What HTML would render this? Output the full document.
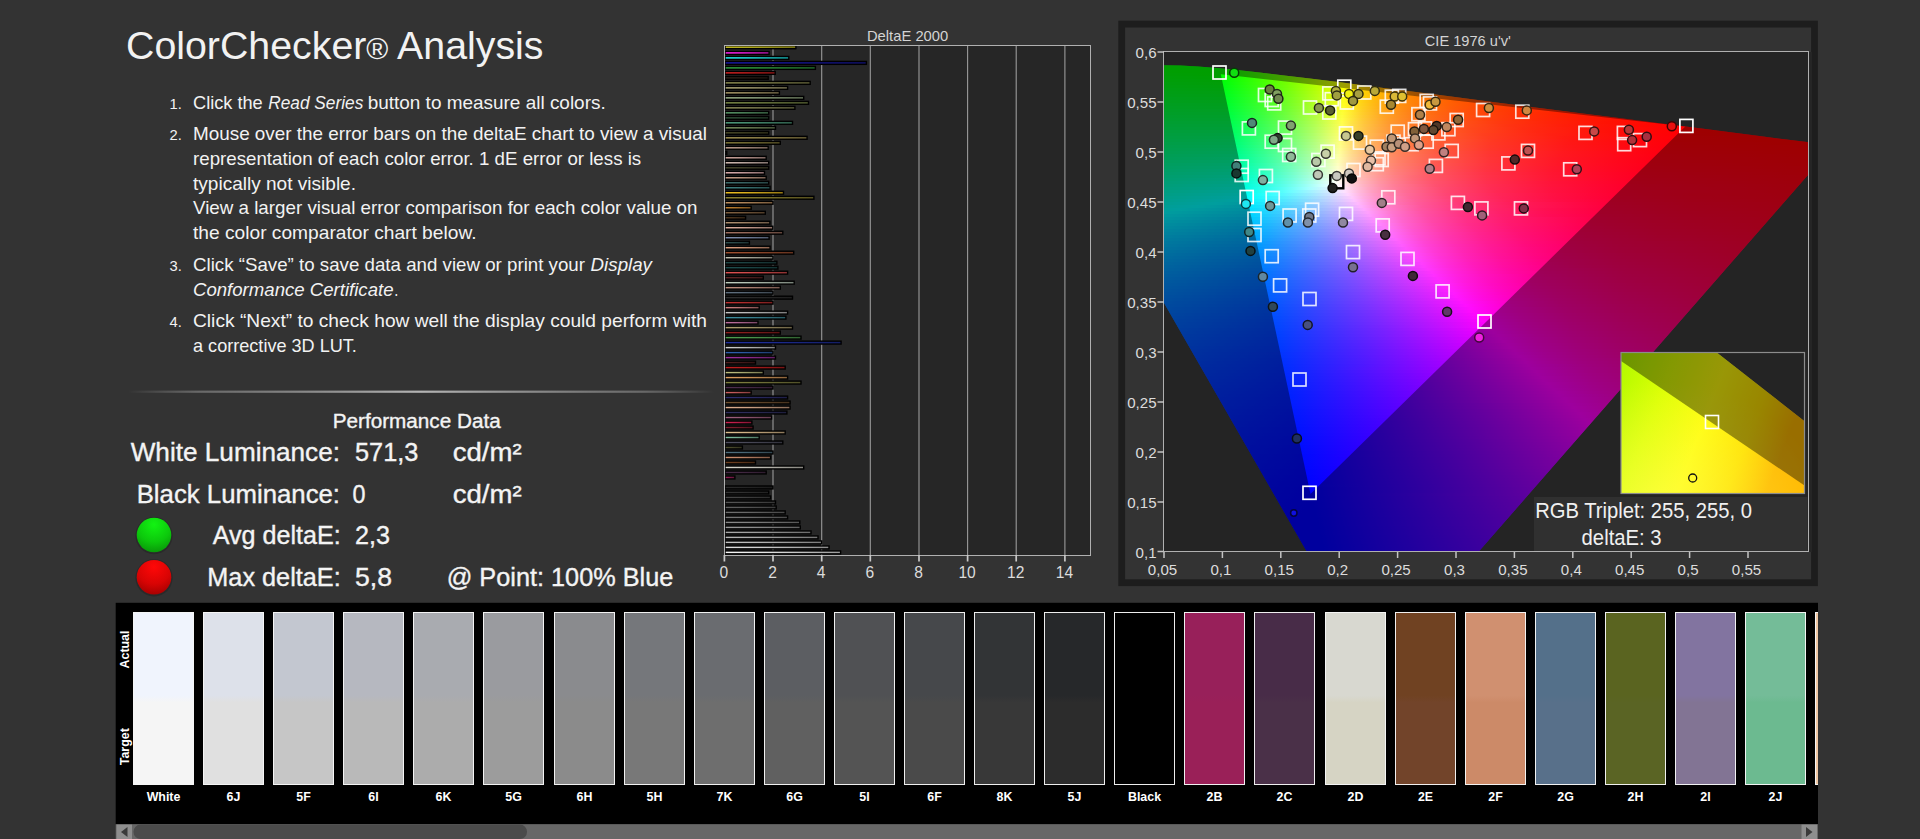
<!DOCTYPE html><html><head><meta charset="utf-8"><title>ColorChecker Analysis</title><style>
html,body{margin:0;padding:0;background:#333}body{width:1920px;height:839px;position:relative;overflow:hidden;font-family:'Liberation Sans',sans-serif}
#cie{position:absolute;left:1164px;top:52px;width:644px;height:499.5px;background:#242424;overflow:hidden}
#cie i{display:block;height:3px}
#ov{position:absolute;left:0;top:0}
text{font-family:'Liberation Sans',sans-serif}
</style></head><body>
<div id="cie">
<i></i>
<i></i>
<i></i>
<i></i>
<i style="background:linear-gradient(90deg,#00ff00 0px,#00ff00 54px,#05ff00 58px)"></i>
<i style="background:linear-gradient(90deg,#00ff01 0px,#01ff00 56px,#35ff00 88px)"></i>
<i style="background:linear-gradient(90deg,#00ff05 0px,#00ff00 56px,#31ff00 86px,#64ff00 114px)"></i>
<i style="background:linear-gradient(90deg,#00ff09 0px,#02ff00 58px,#49ff00 100px,#95ff00 138px)"></i>
<i style="background:linear-gradient(90deg,#00ff0d 0px,#01ff05 58px,#2fff00 86px,#5fff00 112px,#95ff00 138px,#ccff00 162px)"></i>
<i style="background:linear-gradient(90deg,#00ff11 0px,#00ff09 58px,#32ff04 88px,#66ff00 116px,#b0ff00 150px,#fbff00 180px,#fff300 186px)"></i>
<i style="background:linear-gradient(90deg,#00ff15 0px,#02ff0d 60px,#3cff08 94px,#76ff03 124px,#b5ff00 152px,#fcff00 180px,#fffd00 182px,#ffdb00 196px,#ffbf00 210px)"></i>
<i style="background:linear-gradient(90deg,#00ff19 0px,#01ff12 60px,#3bff0d 94px,#76ff08 124px,#b5ff03 152px,#fdff00 180px,#ffc500 206px,#ff9900 234px)"></i>
<i style="background:linear-gradient(90deg,#00ff1e 0px,#00ff17 60px,#3aff12 94px,#76ff0d 124px,#b5ff08 152px,#fdff03 180px,#ffd500 198px,#ffb600 214px,#ff9800 234px,#ff7e00 256px)"></i>
<i style="background:linear-gradient(90deg,#00ff22 0px,#02ff1b 62px,#3dff17 96px,#7aff13 126px,#baff0e 154px,#feff09 180px,#ffd004 200px,#ffa800 222px,#ff8600 248px,#ff6600 280px)"></i>
<i style="background:linear-gradient(90deg,#00ff26 0px,#01ff20 62px,#3dff1c 96px,#79ff18 126px,#baff14 154px,#ffff0f 180px,#ffc708 204px,#ff9902 232px,#ff7400 264px,#ff5300 304px)"></i>
<i style="background:linear-gradient(90deg,#00ff2b 0px,#00ff25 62px,#38ff22 94px,#75ff1e 124px,#b5ff1a 152px,#ffff15 180px,#ffe011 192px,#ffc20d 206px,#ffa609 222px,#ff9005 238px,#ff6600 278px,#ff4500 326px)"></i>
<i style="background:linear-gradient(90deg,#00ff2f 0px,#02ff2a 64px,#38ff27 94px,#74ff24 124px,#b5ff20 152px,#fffe1c 180px,#ffda16 194px,#ffba11 210px,#ff9d0c 228px,#ff8508 246px,#ff5a01 292px,#ff3800 350px)"></i>
<i style="background:linear-gradient(90deg,#00ff34 0px,#01ff2f 64px,#3bff2c 96px,#74ff29 124px,#b0ff26 150px,#fffd22 180px,#ffd51b 196px,#ffb515 212px,#ff960f 232px,#ff7b0a 254px,#ff6506 278px,#ff5002 306px,#ff2c00 374px)"></i>
<i style="background:linear-gradient(90deg,#00ff38 0px,#00ff34 64px,#3aff32 96px,#73ff2f 124px,#b0ff2d 150px,#fffc29 180px,#ffd421 196px,#ffb119 214px,#ff9013 236px,#ff740d 260px,#ff5c08 288px,#ff4603 320px,#ff2300 398px)"></i>
<i style="background:linear-gradient(90deg,#00ff3d 0px,#03ff39 66px,#39ff37 96px,#73ff35 124px,#abff33 148px,#fdff30 178px,#fffc2f 180px,#ffcf25 198px,#ffa91d 218px,#ff8715 242px,#ff6c0f 268px,#ff530a 298px,#ff3d05 334px,#ff1b00 420px)"></i>
<i style="background:linear-gradient(90deg,#00ff41 0px,#01ff3f 66px,#38ff3d 96px,#73ff3b 124px,#b6ff39 152px,#fdff37 178px,#fffb36 180px,#ffce2b 198px,#ffa521 220px,#ff8419 244px,#ff6511 274px,#ff4c0b 308px,#ff3706 346px,#ff2301 392px,#ff1300 444px)"></i>
<i style="background:linear-gradient(90deg,#00ff46 0px,#00ff44 66px,#3bff43 98px,#77ff41 126px,#b6ff40 152px,#feff3e 178px,#ffcd31 198px,#ffa426 220px,#ff811c 246px,#ff6114 278px,#ff470d 314px,#ff3007 358px,#ff1d02 408px,#ff0d00 468px)"></i>
<i style="background:linear-gradient(90deg,#00ff4b 0px,#00ff49 66px,#03ff49 68px,#3bff48 98px,#76ff47 126px,#b6ff46 152px,#ffff45 178px,#ffcc37 198px,#ffa02a 222px,#ff7b1f 250px,#ff5b16 284px,#ff400e 324px,#ff2a08 370px,#ff1703 426px,#ff0700 492px)"></i>
<i style="background:linear-gradient(90deg,#00ff50 0px,#02ff4f 68px,#3aff4e 98px,#76ff4e 126px,#b6ff4d 152px,#fffe4c 178px,#ffe344 188px,#ffc73b 200px,#ff9c2e 224px,#ff7622 254px,#ff5618 290px,#ff3b10 332px,#ff2509 382px,#ff1203 442px,#ff0200 514px)"></i>
<i style="background:linear-gradient(90deg,#00ff55 0px,#01ff54 68px,#39ff54 98px,#76ff54 126px,#b6ff54 152px,#fffe53 178px,#ffe24a 188px,#ffc641 200px,#ff9832 226px,#ff7125 258px,#ff511a 296px,#ff3411 344px,#ff1e09 400px,#ff0802 480px,#ff0000 538px)"></i>
<i style="background:linear-gradient(90deg,#00ff5a 0px,#00ff5a 68px,#34ff5a 96px,#71ff5b 124px,#b1ff5b 150px,#fffd5b 178px,#ffdc4f 190px,#ffc145 202px,#ff9135 230px,#ff6a27 264px,#ff4a1b 304px,#ff2d11 358px,#ff1509 426px,#ff0001 518px,#ff0000 562px)"></i>
<i style="background:linear-gradient(90deg,#00ff5f 0px,#02ff60 70px,#38ff61 98px,#75ff61 126px,#b1ff62 150px,#fcff63 176px,#fffc62 178px,#ffdb55 190px,#ffc04b 202px,#ffa641 216px,#ff8e38 232px,#ff6529 268px,#ff461d 310px,#ff2712 372px,#ff0f09 448px,#ff0003 516px,#ff0000 584px)"></i>
<i style="background:linear-gradient(90deg,#00ff64 0px,#01ff66 70px,#37ff67 98px,#70ff68 124px,#acff69 148px,#fcff6b 176px,#fffb69 178px,#ffda5c 190px,#ffbb50 204px,#ff8a3c 234px,#ff612c 272px,#ff401e 318px,#ff2112 386px,#ff0808 474px,#ff0005 514px,#ff0000 608px)"></i>
<i style="background:linear-gradient(90deg,#00ff69 0px,#00ff6c 70px,#32ff6d 96px,#6fff6f 124px,#b1ff70 150px,#fdff73 176px,#fffa71 178px,#ffd963 190px,#ffba55 204px,#ff9d49 220px,#ff8640 236px,#ff5c2e 276px,#ff3c20 324px,#ff1b12 400px,#ff0208 500px,#ff0000 632px)"></i>
<i style="background:linear-gradient(90deg,#00ff6e 0px,#02ff72 72px,#35ff74 98px,#6fff76 124px,#b1ff78 150px,#feff7b 176px,#fffa78 178px,#ffd869 190px,#ffb95b 204px,#ff9c4f 220px,#ff8544 236px,#ff5c32 276px,#ff3922 328px,#ff1814 406px,#ff0009 506px,#ff0000 644px)"></i>
<i style="background:linear-gradient(90deg,#00ff73 0px,#01ff78 72px,#38ff7a 100px,#78ff7d 128px,#b7ff80 152px,#ffff83 176px,#ffdc72 188px,#ffbc63 202px,#ff9f55 218px,#ff874a 234px,#ff5c36 274px,#ff3925 326px,#ff1816 404px,#ff000b 504px,#ff0001 644px)"></i>
<i style="background:linear-gradient(90deg,#00ff78 0px,#00ff7e 72px,#37ff81 100px,#73ff84 126px,#b7ff87 152px,#fffe8b 176px,#ffdc79 188px,#ffbb69 202px,#ff9e5b 218px,#ff864f 234px,#ff5b3a 274px,#ff3828 326px,#ff1819 402px,#ff000d 500px,#ff0003 644px)"></i>
<i style="background:linear-gradient(90deg,#00ff7e 0px,#02ff85 74px,#3bff88 102px,#77ff8c 128px,#b2ff8f 150px,#fffe93 176px,#ffdb81 188px,#ffba70 202px,#ff9d60 218px,#ff8554 234px,#ff5a3e 274px,#ff372b 326px,#ff181b 402px,#ff000f 498px,#ff0004 644px)"></i>
<i style="background:linear-gradient(90deg,#00ff83 0px,#01ff8b 74px,#36ff8f 100px,#72ff93 126px,#b2ff97 150px,#fffd9b 176px,#ffda88 188px,#ffb976 202px,#ff9c66 218px,#ff8459 234px,#ff5942 274px,#ff362f 326px,#ff181e 400px,#ff0011 494px,#ff0005 644px)"></i>
<i style="background:linear-gradient(90deg,#00ff89 0px,#00ff92 74px,#35ff96 100px,#72ff9a 126px,#acff9f 148px,#fcffa5 174px,#fffca3 176px,#ffd98f 188px,#ffb87c 202px,#ff9b6b 218px,#ff835e 234px,#ff5946 274px,#ff3532 326px,#ff1820 398px,#ff0013 492px,#ff0007 644px)"></i>
<i style="background:linear-gradient(90deg,#00ff8e 0px,#02ff99 76px,#38ff9d 102px,#71ffa2 126px,#b2ffa7 150px,#fcffad 174px,#fffbab 176px,#ffd896 188px,#ffb783 202px,#ff9a71 218px,#ff8263 234px,#ff5849 274px,#ff3535 326px,#ff1723 396px,#ff0015 488px,#ff0008 644px)"></i>
<i style="background:linear-gradient(90deg,#00ff94 0px,#01ff9f 76px,#37ffa4 102px,#71ffaa 126px,#b2ffb0 150px,#fdffb7 174px,#fffab4 176px,#ffd79e 188px,#ffb689 202px,#ff9977 218px,#ff8168 234px,#ff574d 274px,#ff3438 326px,#ff1726 396px,#ff0018 484px,#ff0009 644px)"></i>
<i style="background:linear-gradient(90deg,#00ff9a 0px,#00ffa6 76px,#37ffac 102px,#70ffb2 126px,#b2ffb8 150px,#feffc0 174px,#fff9bc 176px,#ffd6a5 188px,#ffb590 202px,#ff977c 218px,#ff806d 234px,#ff5651 274px,#ff333b 326px,#ff1728 394px,#ff001a 482px,#ff000a 644px)"></i>
<i style="background:linear-gradient(90deg,#00ffa0 0px,#00ffad 76px,#03ffae 78px,#3affb4 104px,#7affbb 130px,#b8ffc2 152px,#ffffc9 174px,#ffdab0 186px,#ffb899 200px,#ff9a84 216px,#ff8174 232px,#ff5657 272px,#ff343f 322px,#ff172c 390px,#ff001c 478px,#ff000c 644px)"></i>
<i style="background:linear-gradient(90deg,#00ffa5 0px,#01ffb5 78px,#39ffbb 104px,#74ffc2 128px,#b2ffca 150px,#fffed2 174px,#ffd9b8 186px,#ffb7a0 200px,#ff998a 216px,#ff8079 232px,#ff555b 272px,#ff3342 322px,#ff162e 390px,#ff001e 476px,#ff000d 644px)"></i>
<i style="background:linear-gradient(90deg,#00ffab 0px,#00ffbc 78px,#38ffc3 104px,#74ffcb 128px,#b2ffd3 150px,#fffddb 174px,#ffd8c0 186px,#ffb6a7 200px,#ff9890 216px,#ff7f7e 232px,#ff545f 272px,#ff3246 322px,#ff1631 388px,#ff0021 472px,#ff000e 644px)"></i>
<i style="background:linear-gradient(90deg,#00ffb1 0px,#00ffc3 78px,#03ffc4 80px,#37ffcb 104px,#73ffd3 128px,#acffdb 148px,#fffce5 174px,#ffd7c8 186px,#ffb9b1 198px,#ff9a99 214px,#ff8186 230px,#ff6b75 248px,#ff5564 270px,#ff3249 322px,#ff1633 388px,#ff0023 470px,#ff0010 644px)"></i>
<i style="background:linear-gradient(90deg,#00ffb7 0px,#02ffcc 80px,#37ffd3 104px,#73ffdc 128px,#acffe4 148px,#fbfff0 172px,#fffcee 174px,#ffd6d0 186px,#ffb8b8 198px,#ff999f 214px,#ff808b 230px,#ff6a79 248px,#ff5468 270px,#ff314c 322px,#ff1636 386px,#ff0026 466px,#ff0011 644px)"></i>
<i style="background:linear-gradient(90deg,#00ffbe 0px,#00ffd3 80px,#36ffdb 104px,#72ffe5 128px,#b3ffef 150px,#fcfffa 172px,#fffbf7 174px,#ffd5d8 186px,#ffb7bf 198px,#ff98a5 214px,#ff7f91 230px,#ff697e 248px,#ff536d 270px,#ff304f 322px,#ff153a 384px,#ff0028 464px,#ff0012 644px)"></i>
<i style="background:linear-gradient(90deg,#00ffc4 0px,#00ffdb 80px,#2bffe2 100px,#62ffeb 122px,#9afff5 142px,#daffff 162px,#fdf8ff 174px,#fff3fb 176px,#ffcfdc 188px,#ffb2c3 200px,#ff93a9 216px,#ff7b94 232px,#ff506f 272px,#ff2e52 324px,#ff153c 384px,#ff002b 460px,#ff0014 642px)"></i>
<i style="background:linear-gradient(90deg,#00ffca 0px,#02ffe3 82px,#4cfff1 114px,#a0ffff 144px,#ffebfe 178px,#ffc8df 190px,#ffa8c3 204px,#ff8ba9 220px,#ff7595 236px,#ff4c71 276px,#ff2c54 326px,#ff143f 384px,#ff002d 458px,#ff0015 640px)"></i>
<i style="background:linear-gradient(90deg,#00ffd1 0px,#00ffec 82px,#33fff5 104px,#6bfeff 126px,#fce1ff 180px,#ffddfc 182px,#ffbdde 194px,#ff9fc2 208px,#ff84a9 224px,#ff6e96 240px,#ff4872 280px,#ff2854 332px,#ff1241 386px,#ff0030 454px,#ff0017 636px)"></i>
<i style="background:linear-gradient(90deg,#00ffd7 0px,#00fff4 82px,#3bfeff 108px,#99ebff 146px,#ffd6ff 184px,#ffb7e1 196px,#ff9ac6 210px,#ff80ad 226px,#ff6b99 242px,#ff4574 282px,#ff2657 334px,#ff1143 388px,#ff0032 452px,#ff0024 534px,#ff0019 634px)"></i>
<i style="background:linear-gradient(90deg,#00ffde 0px,#02fffd 84px,#76e9ff 134px,#ffcafd 188px,#ffade0 200px,#ff92c5 214px,#ff6599 246px,#ff4176 286px,#ff2358 338px,#ff1045 388px,#ff0035 448px,#ff0026 530px,#ff001a 632px)"></i>
<i style="background:linear-gradient(90deg,#00ffe4 0px,#00ffff 70px,#01f9ff 84px,#6de2ff 132px,#fec3ff 190px,#ffbffb 192px,#ffa3df 204px,#ff8ac5 218px,#ff73ad 234px,#ff5e98 252px,#ff3b74 294px,#ff2058 344px,#ff0f47 390px,#ff0038 446px,#ff0028 528px,#ff001c 628px)"></i>
<i style="background:linear-gradient(90deg,#00ffeb 0px,#00ffff 52px,#00f1ff 84px,#72d8ff 136px,#ffb8fe 194px,#ff9ee2 206px,#ff85c8 220px,#ff6fb0 236px,#ff5a9b 254px,#ff3876 296px,#ff1e5b 346px,#ff003b 442px,#ff002b 524px,#ff001e 626px)"></i>
<i style="background:linear-gradient(90deg,#00fff2 0px,#00ffff 34px,#02e8ff 86px,#72cfff 138px,#fdb1ff 196px,#ffaefc 198px,#ff95e1 210px,#ff7ec8 224px,#ff559b 258px,#ff3577 300px,#ff1c5c 350px,#ff003e 440px,#ff002d 522px,#ff001f 624px)"></i>
<i style="background:linear-gradient(90deg,#00fff9 0px,#00ffff 16px,#01e1ff 86px,#7cc6ff 144px,#ffa8ff 200px,#ff7dce 224px,#ff58a4 254px,#ff3a83 290px,#ff2368 332px,#ff1052 380px,#ff0041 436px,#ff002f 518px,#ff0021 620px)"></i>
<i style="background:linear-gradient(90deg,#00feff 0px,#00daff 86px,#6fc1ff 140px,#ff9ffd 204px,#ff76ce 228px,#ff53a5 258px,#ff3784 294px,#ff2069 336px,#ff0f55 380px,#ff0043 434px,#ff0031 516px,#ff0023 618px)"></i>
<i style="background:linear-gradient(90deg,#00f7ff 0px,#02d3ff 88px,#6bbbff 140px,#fe99ff 206px,#ff95fb 208px,#ff6fcd 232px,#ff4ea5 262px,#ff3384 298px,#ff1d6a 340px,#ff0d57 382px,#ff0047 430px,#ff0034 512px,#ff0024 616px)"></i>
<i style="background:linear-gradient(90deg,#00f0ff 0px,#01ccff 88px,#78b1ff 148px,#ff90fe 210px,#ff6bd0 234px,#ff4ba8 264px,#ff3187 300px,#ff1b6c 342px,#ff004a 428px,#ff0036 510px,#ff0026 614px)"></i>
<i style="background:linear-gradient(90deg,#00eaff 0px,#00c6ff 88px,#6cadff 144px,#fd8bff 212px,#ff88fc 214px,#ff65cf 238px,#ff47a8 268px,#ff2f89 302px,#ff1a6e 344px,#ff004d 424px,#ff0039 506px,#ff0028 610px)"></i>
<i style="background:linear-gradient(90deg,#00e4ff 0px,#02bfff 90px,#7ca2ff 154px,#ff83ff 216px,#ff62d2 240px,#ff44ab 270px,#ff2c8b 304px,#ff1870 346px,#ff0050 422px,#ff003b 504px,#ff002a 608px)"></i>
<i style="background:linear-gradient(90deg,#00deff 0px,#01baff 90px,#749eff 152px,#ff7cfd 220px,#ff5cd1 244px,#ff40ab 274px,#ff298c 308px,#ff1571 350px,#ff0054 418px,#ff003d 502px,#ff002b 606px)"></i>
<i style="background:linear-gradient(90deg,#00d8ff 0px,#00b5ff 90px,#7997ff 156px,#fe77ff 222px,#ff56d1 248px,#ff3dad 276px,#ff278e 310px,#ff1474 350px,#ff0057 416px,#ff0040 498px,#ff002d 602px)"></i>
<i style="background:linear-gradient(90deg,#00d3ff 0px,#02afff 92px,#7992ff 158px,#ff70fe 226px,#ff53d3 250px,#ff39ae 280px,#ff248f 314px,#ff1275 354px,#ff005b 412px,#ff0042 496px,#ff002f 600px)"></i>
<i style="background:linear-gradient(90deg,#00cdff 0px,#01aaff 92px,#728eff 156px,#fe6bff 228px,#ff69fc 230px,#ff4ed3 254px,#ff36b0 282px,#ff2291 316px,#ff1077 356px,#ff005e 410px,#ff0045 494px,#ff0031 598px)"></i>
<i style="background:linear-gradient(90deg,#00c8ff 0px,#00a5ff 92px,#7987ff 162px,#ff65ff 232px,#ff4ad5 256px,#ff34b2 284px,#ff2093 318px,#ff0f79 358px,#ff0062 406px,#ff0048 490px,#ff0033 594px)"></i>
<i style="background:linear-gradient(90deg,#00c3ff 0px,#029fff 94px,#7682ff 162px,#ff5ffd 236px,#ff45d5 260px,#ff30b2 288px,#ff1d94 322px,#ff0d7b 360px,#ff0066 404px,#ff0053 458px,#ff0035 592px)"></i>
<i style="background:linear-gradient(90deg,#00bfff 0px,#019bff 94px,#7d7cff 168px,#ff5bff 238px,#ff42d7 262px,#ff2db5 290px,#ff1b96 324px,#ff0b7d 362px,#ff006a 400px,#ff0055 458px,#ff0037 590px)"></i>
<i style="background:linear-gradient(90deg,#00baff 0px,#0097ff 94px,#7679ff 166px,#ff55fe 242px,#ff3ed7 266px,#ff2ab5 294px,#ff1998 326px,#ff0a7f 364px,#ff006d 398px,#ff0057 458px,#ff0039 586px)"></i>
<i style="background:linear-gradient(90deg,#00b6ff 0px,#0093ff 94px,#6c77ff 162px,#fe51ff 244px,#ff4ffc 246px,#ff39d6 270px,#ff26b5 298px,#ff1698 330px,#ff0881 366px,#ff0072 394px,#ff0058 460px,#ff003b 584px)"></i>
<i style="background:linear-gradient(90deg,#00b1ff 0px,#018eff 96px,#7a6fff 172px,#ff4cfe 248px,#ff37d8 272px,#ff24b7 300px,#ff149a 332px,#ff0782 368px,#ff0076 392px,#ff005b 460px,#ff003d 582px)"></i>
<i style="background:linear-gradient(90deg,#00adff 0px,#008aff 96px,#736cff 170px,#ff47fd 252px,#ff32d8 276px,#ff22b9 302px,#ff129c 334px,#ff0584 370px,#ff007a 388px,#ff005d 460px,#ff003f 580px)"></i>
<i style="background:linear-gradient(90deg,#00a9ff 0px,#0086ff 96px,#7767ff 174px,#ff43ff 254px,#ff30da 278px,#ff20bb 304px,#ff119e 336px,#ff0486 372px,#ff007e 386px,#ff005f 460px,#ff0041 576px)"></i>
<i style="background:linear-gradient(90deg,#00a5ff 0px,#0182ff 98px,#7763ff 176px,#ff3efe 258px,#ff2cd9 282px,#ff1cbb 308px,#ff0fa0 338px,#ff0288 374px,#ff0073 414px,#ff0061 460px,#ff0043 574px)"></i>
<i style="background:linear-gradient(90deg,#00a1ff 0px,#007fff 98px,#7d5dff 182px,#fe3bff 260px,#ff29db 284px,#ff1abd 310px,#ff0da2 340px,#ff018a 376px,#ff0075 416px,#ff0063 462px,#ff0045 572px)"></i>
<i style="background:linear-gradient(90deg,#009eff 0px,#007bff 98px,#745cff 178px,#ff37fe 264px,#ff26db 288px,#ff17bd 314px,#ff0aa3 344px,#ff008b 378px,#ff0066 460px,#ff0048 568px)"></i>
<i style="background:linear-gradient(90deg,#009aff 0px,#0177ff 100px,#7458ff 180px,#ff32fd 268px,#ff23dd 290px,#ff15bf 316px,#ff09a4 346px,#ff008d 380px,#ff0067 462px,#ff004a 566px)"></i>
<i style="background:linear-gradient(90deg,#0097ff 0px,#0074ff 100px,#7e52ff 188px,#ff2fff 270px,#ff21df 292px,#ff13c1 318px,#ff0199 366px,#ff0090 380px,#ff006a 460px,#ff004c 564px)"></i>
<i style="background:linear-gradient(90deg,#0093ff 0px,#0071ff 100px,#7252ff 182px,#ff2bfe 274px,#ff1dde 296px,#ff10c1 322px,#ff009c 366px,#ff0092 382px,#ff006c 460px,#ff004f 560px)"></i>
<i style="background:linear-gradient(90deg,#0090ff 0px,#016dff 102px,#7e4bff 192px,#fe28ff 276px,#ff1add 300px,#ff0ec3 324px,#ff00a2 362px,#ff0094 384px,#ff006e 460px,#ff0051 558px)"></i>
<i style="background:linear-gradient(90deg,#008dff 0px,#006bff 102px,#784aff 190px,#ff25fe 280px,#ff18df 302px,#ff0cc4 326px,#ff00a7 360px,#ff0095 386px,#ff0070 462px,#ff0053 556px)"></i>
<i style="background:linear-gradient(90deg,#008aff 0px,#0068ff 102px,#7049ff 186px,#ff21fd 284px,#ff14df 306px,#ff0ac4 330px,#ff00ac 358px,#ff0097 388px,#ff0073 460px,#ff0056 552px)"></i>
<i style="background:linear-gradient(90deg,#0087ff 0px,#0164ff 104px,#7b43ff 196px,#ff1eff 286px,#ff12e1 308px,#ff08c6 332px,#ff00b2 354px,#ff0099 390px,#ff0074 462px,#ff0058 550px)"></i>
<i style="background:linear-gradient(90deg,#0084ff 0px,#0062ff 104px,#7641ff 194px,#ff1bfe 290px,#ff0fe0 312px,#ff05c6 336px,#ff00b7 352px,#ff009a 392px,#ff0077 462px,#ff005a 548px)"></i>
<i style="background:linear-gradient(90deg,#0081ff 0px,#005fff 104px,#7b3dff 200px,#ff18ff 292px,#ff0bdd 318px,#ff00be 348px,#ff009d 392px,#ff007a 460px,#ff005d 544px)"></i>
<i style="background:linear-gradient(90deg,#007eff 0px,#015cff 106px,#793bff 200px,#ff15fe 296px,#ff0ae1 318px,#ff00c6 344px,#ff009f 394px,#ff007c 460px,#ff0060 542px)"></i>
<i style="background:linear-gradient(90deg,#007bff 0px,#015aff 106px,#7c37ff 204px,#fe12ff 298px,#ff00cb 342px,#ff00a0 396px,#ff007e 460px,#ff0062 540px)"></i>
<i style="background:linear-gradient(90deg,#0079ff 0px,#0057ff 106px,#7935ff 204px,#ff0fff 302px,#ff00d3 338px,#ff00b9 366px,#ff00a3 396px,#ff0081 460px,#ff0064 538px)"></i>
<i style="background:linear-gradient(90deg,#0076ff 0px,#0154ff 108px,#7733ff 204px,#ff0cfe 306px,#ff00d9 336px,#ff00cd 348px,#ff00a5 398px,#ff0083 460px,#ff0068 534px)"></i>
<i style="background:linear-gradient(90deg,#0074ff 0px,#0152ff 108px,#7c2fff 210px,#ff0aff 308px,#ff00e1 332px,#ff00ce 350px,#ff00a6 400px,#ff0085 460px,#ff006a 532px)"></i>
<i style="background:linear-gradient(90deg,#0071ff 0px,#0050ff 108px,#772eff 208px,#ff07fe 312px,#ff00e7 330px,#ff00d0 352px,#ff00a8 402px,#ff0088 460px,#ff006d 530px)"></i>
<i style="background:linear-gradient(90deg,#006eff 2px,#014dff 110px,#7c2aff 214px,#fe05ff 314px,#ff00f0 326px,#ff00d0 356px,#ff00ab 402px,#ff008b 458px,#ff0070 526px)"></i>
<i style="background:linear-gradient(90deg,#006bff 4px,#014bff 110px,#7a29ff 214px,#ff02ff 318px,#ff00d1 358px,#ff00ac 404px,#ff008d 458px,#ff0072 524px)"></i>
<i style="background:linear-gradient(90deg,#0068ff 6px,#0049ff 110px,#7528ff 212px,#ff00fd 322px,#ff00d3 360px,#ff00ae 406px,#ff008f 460px,#ff0075 522px)"></i>
<i style="background:linear-gradient(90deg,#0066ff 8px,#0147ff 112px,#7c23ff 220px,#ff00ff 324px,#ff00d4 362px,#ff00b1 406px,#ff0092 458px,#ff0078 518px)"></i>
<i style="background:linear-gradient(90deg,#0063ff 8px,#0145ff 112px,#7722ff 218px,#ee00ff 314px,#ff00fe 328px,#ff00d6 364px,#ff00b2 408px,#ff0094 458px,#ff007b 516px)"></i>
<i style="background:linear-gradient(90deg,#0061ff 10px,#0043ff 112px,#7c1fff 224px,#e500ff 310px,#fe00ff 330px,#ff00d7 366px,#ff00b5 408px,#ff0098 456px,#ff007e 514px)"></i>
<i style="background:linear-gradient(90deg,#005eff 12px,#0141ff 114px,#6f21ff 214px,#df00ff 308px,#ff00fe 334px,#ff00d7 370px,#ff00b6 410px,#ff009a 456px,#ff0082 510px)"></i>
<i style="background:linear-gradient(90deg,#005cff 14px,#013fff 114px,#6a20ff 212px,#d600ff 304px,#fe00ff 336px,#ff00d9 372px,#ff00b9 410px,#ff009d 456px,#ff0084 508px)"></i>
<i style="background:linear-gradient(90deg,#0059ff 16px,#003dff 114px,#661fff 210px,#d000ff 302px,#ff00ff 340px,#ff00da 374px,#ff00bb 412px,#ff009f 456px,#ff0087 506px)"></i>
<i style="background:linear-gradient(90deg,#0057ff 18px,#013bff 116px,#621eff 208px,#c800ff 298px,#ff00fe 344px,#ff00db 376px,#ff00be 412px,#ff00a3 454px,#ff008b 502px)"></i>
<i style="background:linear-gradient(90deg,#0054ff 20px,#0139ff 116px,#601dff 208px,#c300ff 296px,#ff00ff 346px,#ff00dd 378px,#ff00bf 414px,#ff00a5 454px,#ff008e 500px)"></i>
<i style="background:linear-gradient(90deg,#0052ff 20px,#0038ff 116px,#5c1cff 206px,#bb00ff 292px,#ff00fe 350px,#ff00de 380px,#ff00c2 414px,#ff00a8 454px,#ff0091 498px)"></i>
<i style="background:linear-gradient(90deg,#0050ff 22px,#0235ff 118px,#5b1bff 206px,#b600ff 290px,#fe00ff 352px,#ff00de 384px,#ff00c3 416px,#ff00aa 454px,#ff0094 496px)"></i>
<i style="background:linear-gradient(90deg,#004eff 24px,#0134ff 118px,#571aff 204px,#af00ff 286px,#ff00ff 356px,#ff00e1 384px,#ff00c6 416px,#ff00ae 452px,#ff0098 492px)"></i>
<i style="background:linear-gradient(90deg,#004cff 26px,#0032ff 118px,#531aff 202px,#aa00ff 284px,#ff00fe 360px,#ff00e1 388px,#ff00c7 418px,#ff009c 490px)"></i>
<i style="background:linear-gradient(90deg,#0049ff 28px,#0031ff 118px,#4e1aff 198px,#a300ff 280px,#ff00ff 362px,#ff00e2 390px,#ff00ca 418px,#ff009f 488px)"></i>
<i style="background:linear-gradient(90deg,#0047ff 30px,#012fff 120px,#4e18ff 200px,#9f00ff 278px,#fd00ff 364px,#ff00cc 420px,#ff00a3 484px)"></i>
<i style="background:linear-gradient(90deg,#0045ff 32px,#002eff 120px,#9800ff 274px,#fe00ff 368px,#ff00cf 420px,#ff00a7 482px)"></i>
<i style="background:linear-gradient(90deg,#0044ff 32px,#002cff 120px,#9400ff 272px,#ff00ff 372px,#ff00d0 422px,#ff00aa 480px)"></i>
<i style="background:linear-gradient(90deg,#0042ff 34px,#012aff 122px,#8d00ff 268px,#fe00ff 374px,#ff00d3 422px,#ff00af 476px)"></i>
<i style="background:linear-gradient(90deg,#0040ff 36px,#0029ff 122px,#8900ff 266px,#ff00ff 378px,#ff00d6 422px,#ff00b2 474px)"></i>
<i style="background:linear-gradient(90deg,#003eff 38px,#0028ff 122px,#8300ff 262px,#fe00ff 380px,#ff00d5 426px,#ff00b6 472px)"></i>
<i style="background:linear-gradient(90deg,#003cff 40px,#0126ff 124px,#7f00ff 260px,#ff00ff 384px,#ff00da 424px,#ff00bb 468px)"></i>
<i style="background:linear-gradient(90deg,#003aff 42px,#0025ff 124px,#7900ff 256px,#fd00ff 386px,#ff00da 428px,#ff00be 466px)"></i>
<i style="background:linear-gradient(90deg,#0038ff 44px,#0024ff 124px,#7600ff 254px,#fe00ff 390px,#ff00de 426px,#ff00c2 464px)"></i>
<i style="background:linear-gradient(90deg,#0037ff 44px,#0122ff 126px,#7000ff 250px,#ff00ff 394px,#ff00e1 426px,#ff00c6 462px)"></i>
<i style="background:linear-gradient(90deg,#0035ff 46px,#0021ff 126px,#6d00ff 248px,#fe00ff 396px,#ff00cb 458px)"></i>
<i style="background:linear-gradient(90deg,#0033ff 48px,#0020ff 126px,#6700ff 244px,#ff00ff 400px,#ff00cf 456px)"></i>
<i style="background:linear-gradient(90deg,#0031ff 50px,#011eff 128px,#6400ff 242px,#fd00ff 402px,#ff00d3 454px)"></i>
<i style="background:linear-gradient(90deg,#0030ff 52px,#011dff 128px,#5f00ff 238px,#ae00ff 324px,#fe00ff 406px,#ff00d9 450px)"></i>
<i style="background:linear-gradient(90deg,#002eff 54px,#001cff 128px,#5c00ff 236px,#ac00ff 324px,#ff00ff 410px,#ff00dd 448px)"></i>
<i style="background:linear-gradient(90deg,#002cff 56px,#011aff 130px,#5700ff 232px,#a900ff 324px,#fe00ff 412px,#ff00e2 446px)"></i>
<i style="background:linear-gradient(90deg,#002bff 58px,#0119ff 130px,#5400ff 230px,#a700ff 324px,#ff00ff 416px,#ff00e8 442px)"></i>
<i style="background:linear-gradient(90deg,#0029ff 58px,#0018ff 130px,#4f00ff 226px,#a500ff 324px,#fe00ff 418px,#ff00ec 440px)"></i>
<i style="background:linear-gradient(90deg,#0028ff 60px,#0117ff 132px,#4a00ff 222px,#a300ff 324px,#fe00ff 422px,#ff00f1 438px)"></i>
<i style="background:linear-gradient(90deg,#0026ff 62px,#0116ff 132px,#4700ff 220px,#a100ff 324px,#fd00ff 424px,#ff00f7 434px)"></i>
<i style="background:linear-gradient(90deg,#0025ff 64px,#0015ff 132px,#4300ff 216px,#9f00ff 324px,#fe00ff 428px,#ff00fc 432px)"></i>
<i style="background:linear-gradient(90deg,#0023ff 66px,#0113ff 134px,#4000ff 214px,#9d00ff 324px,#fd00ff 430px)"></i>
<i style="background:linear-gradient(90deg,#0022ff 68px,#0113ff 134px,#3c00ff 210px,#9700ff 320px,#f600ff 426px)"></i>
<i style="background:linear-gradient(90deg,#0020ff 70px,#0012ff 134px,#3900ff 208px,#9400ff 318px,#f200ff 424px)"></i>
<i style="background:linear-gradient(90deg,#001fff 70px,#0110ff 136px,#3500ff 204px,#8f00ff 314px,#ed00ff 422px)"></i>
<i style="background:linear-gradient(90deg,#001eff 72px,#010fff 136px,#3300ff 202px,#8b00ff 312px,#e900ff 420px)"></i>
<i style="background:linear-gradient(90deg,#001dff 74px,#000fff 136px,#2f00ff 198px,#8600ff 308px,#e200ff 416px)"></i>
<i style="background:linear-gradient(90deg,#001bff 76px,#010dff 138px,#2c00ff 196px,#8300ff 306px,#de00ff 414px)"></i>
<i style="background:linear-gradient(90deg,#001aff 78px,#010cff 138px,#2900ff 192px,#8000ff 304px,#da00ff 412px)"></i>
<i style="background:linear-gradient(90deg,#0019ff 80px,#000cff 138px,#2600ff 190px,#7b00ff 300px,#d400ff 408px)"></i>
<i style="background:linear-gradient(90deg,#0017ff 82px,#010aff 140px,#2300ff 186px,#7800ff 298px,#d000ff 406px)"></i>
<i style="background:linear-gradient(90deg,#0016ff 82px,#010aff 140px,#2000ff 184px,#7500ff 296px,#cc00ff 404px)"></i>
<i style="background:linear-gradient(90deg,#0015ff 84px,#0009ff 140px,#1d00ff 180px,#7000ff 292px,#c600ff 400px)"></i>
<i style="background:linear-gradient(90deg,#0014ff 86px,#0008ff 140px,#1b00ff 178px,#6d00ff 290px,#c300ff 398px)"></i>
<i style="background:linear-gradient(90deg,#0013ff 88px,#0107ff 142px,#1700ff 174px,#6900ff 286px,#bf00ff 396px)"></i>
<i style="background:linear-gradient(90deg,#0011ff 90px,#0006ff 142px,#1500ff 172px,#6600ff 284px,#ba00ff 392px)"></i>
<i style="background:linear-gradient(90deg,#0010ff 92px,#0006ff 142px,#1200ff 168px,#6200ff 280px,#b600ff 390px)"></i>
<i style="background:linear-gradient(90deg,#000fff 94px,#0104ff 144px,#1000ff 166px,#5f00ff 278px,#b200ff 388px)"></i>
<i style="background:linear-gradient(90deg,#000eff 94px,#0004ff 144px,#0d00ff 162px,#5b00ff 274px,#ad00ff 384px)"></i>
<i style="background:linear-gradient(90deg,#000dff 96px,#0003ff 144px,#0b00ff 160px,#5300ff 264px,#aa00ff 382px)"></i>
<i style="background:linear-gradient(90deg,#000cff 98px,#0102ff 146px,#5200ff 264px,#a700ff 380px)"></i>
<i style="background:linear-gradient(90deg,#000bff 100px,#0001ff 146px,#5100ff 264px,#a300ff 378px)"></i>
<i style="background:linear-gradient(90deg,#000aff 102px,#0001ff 146px,#4e00ff 262px,#9f00ff 374px)"></i>
<i style="background:linear-gradient(90deg,#0009ff 104px,#0100ff 148px,#9c00ff 372px)"></i>
<i style="background:linear-gradient(90deg,#0008ff 106px,#0000ff 148px,#9800ff 370px)"></i>
<i style="background:linear-gradient(90deg,#0007ff 106px,#0000ff 148px,#9400ff 366px)"></i>
<i style="background:linear-gradient(90deg,#0006ff 108px,#0100ff 150px,#9100ff 364px)"></i>
<i style="background:linear-gradient(90deg,#0005ff 110px,#0100ff 150px,#8e00ff 362px)"></i>
<i style="background:linear-gradient(90deg,#0004ff 112px,#0000ff 150px,#8a00ff 358px)"></i>
<i style="background:linear-gradient(90deg,#0003ff 114px,#0100ff 152px,#8700ff 356px)"></i>
<i style="background:linear-gradient(90deg,#0002ff 116px,#0100ff 152px,#8400ff 354px)"></i>
<i style="background:linear-gradient(90deg,#0001ff 118px,#0000ff 152px,#8000ff 350px)"></i>
<i style="background:linear-gradient(90deg,#0000ff 120px,#0100ff 154px,#7d00ff 348px)"></i>
<i style="background:linear-gradient(90deg,#0000ff 120px,#0100ff 154px,#7b00ff 346px)"></i>
<i style="background:linear-gradient(90deg,#0000ff 122px,#0000ff 154px,#7800ff 344px)"></i>
<i style="background:linear-gradient(90deg,#0000ff 124px,#0100ff 156px,#7400ff 340px)"></i>
<i style="background:linear-gradient(90deg,#0000ff 126px,#0100ff 156px,#7200ff 338px)"></i>
<i style="background:linear-gradient(90deg,#0000ff 128px,#0000ff 156px,#6f00ff 336px)"></i>
<i style="background:linear-gradient(90deg,#0000ff 130px,#0100ff 158px,#6b00ff 332px)"></i>
<i style="background:linear-gradient(90deg,#0000ff 132px,#0100ff 158px,#6900ff 330px)"></i>
<i style="background:linear-gradient(90deg,#0000ff 132px,#0000ff 158px,#6700ff 328px)"></i>
<i style="background:linear-gradient(90deg,#0000ff 134px,#0000ff 158px,#6300ff 324px)"></i>
<i style="background:linear-gradient(90deg,#0000ff 136px,#0100ff 160px,#6100ff 322px)"></i>
</div>
<svg id="ov" width="1920" height="839" viewBox="0 0 1920 839">
<defs>
<clipPath id="pc"><rect x="1164" y="52" width="644" height="499.5"/></clipPath>
<radialGradient id="gg" cx=".5" cy=".2" r=".9"><stop offset="0" stop-color="#12f312"/><stop offset=".55" stop-color="#0cc80c"/><stop offset="1" stop-color="#088a08"/></radialGradient>
<radialGradient id="gr" cx=".5" cy=".2" r=".9"><stop offset="0" stop-color="#ff0808"/><stop offset=".55" stop-color="#d80404"/><stop offset="1" stop-color="#980000"/></radialGradient>
<linearGradient id="hr" x1="0" x2="1" y1="0" y2="0"><stop offset="0" stop-color="#999" stop-opacity="0"/><stop offset=".12" stop-color="#8c8c8c" stop-opacity=".6"/><stop offset=".5" stop-color="#b4b4b4"/><stop offset=".88" stop-color="#8c8c8c" stop-opacity=".6"/><stop offset="1" stop-color="#999" stop-opacity="0"/></linearGradient>
<linearGradient id="ins" x1="0" y1="0" x2="1" y2=".3"><stop offset="0" stop-color="#b0fa00"/><stop offset=".28" stop-color="#dcff04"/><stop offset=".55" stop-color="#fffc0c"/><stop offset=".8" stop-color="#ffe000"/><stop offset="1" stop-color="#ffb800"/></linearGradient>
<radialGradient id="insw" cx=".2" cy="1.1" r=".9"><stop offset="0" stop-color="#ffff60" stop-opacity=".55"/><stop offset="1" stop-color="#ffff60" stop-opacity="0"/></radialGradient>
<linearGradient id="bsh" x1="0" x2="1" y1="0" y2="0"><stop offset="0" stop-color="#000" stop-opacity="0"/><stop offset=".35" stop-color="#000" stop-opacity=".08"/><stop offset="1" stop-color="#000" stop-opacity=".38"/></linearGradient>
</defs>
<g clip-path="url(#pc)">
<path fill-rule="evenodd" fill="#242424" d="M1162,50h648v503.5h-648Z M1405.5,635.4 L1320.2,575.0 L1307.0,552.0 L1164.0,303.0 L1154.0,285.6 L1138.5,240.3 L1119.5,182.2 L1109.7,138.9 L1107.3,108.8 L1111.0,88.2 L1119.9,75.0 L1132.6,68.3 L1147.7,65.9 L1164.1,65.2 L1180.7,65.5 L1198.1,66.4 L1216.9,67.9 L1237.2,69.9 L1259.6,72.4 L1284.4,75.4 L1311.9,78.8 L1342.2,82.6 L1375.6,86.9 L1412.0,91.6 L1451.3,96.6 L1492.8,101.9 L1535.5,107.4 L1576.9,112.7 L1617.1,117.8 L1653.6,122.4 L1685.8,126.6 L1713.3,130.1 L1736.2,133.0 L1755.6,135.5 L1772.4,137.7 L1786.6,139.5 L1807.0,142.1 L1819.1,143.6 L1829.6,145.0 L1833.7,145.5Z"/>
<path fill-rule="evenodd" fill="#000" fill-opacity=".38" d="M1405.5,635.4 L1320.2,575.0 L1307.0,552.0 L1164.0,303.0 L1154.0,285.6 L1138.5,240.3 L1119.5,182.2 L1109.7,138.9 L1107.3,108.8 L1111.0,88.2 L1119.9,75.0 L1132.6,68.3 L1147.7,65.9 L1164.1,65.2 L1180.7,65.5 L1198.1,66.4 L1216.9,67.9 L1237.2,69.9 L1259.6,72.4 L1284.4,75.4 L1311.9,78.8 L1342.2,82.6 L1375.6,86.9 L1412.0,91.6 L1451.3,96.6 L1492.8,101.9 L1535.5,107.4 L1576.9,112.7 L1617.1,117.8 L1653.6,122.4 L1685.8,126.6 L1713.3,130.1 L1736.2,133.0 L1755.6,135.5 L1772.4,137.7 L1786.6,139.5 L1807.0,142.1 L1819.1,143.6 L1829.6,145.0 L1833.7,145.5Z M1685.3,126.5 L1220.8,74.3 L1310.5,494.1Z"/>
</g>
<rect x="1121.7" y="24.1" width="692.8" height="558.6" fill="none" stroke="#1d1d1d" stroke-width="6.8"/>
<rect x="1809" y="52" width="3" height="500" fill="#252525"/>
<g stroke="#b0b0b0" stroke-width="1" fill="none">
<rect x="1163.5" y="51.5" width="645" height="500"/>
<path d="M1164.0,551.5h-6.5M1164.0,502.0h-6.5M1164.0,452.0h-6.5M1164.0,402.0h-6.5M1164.0,352.0h-6.5M1164.0,302.0h-6.5M1164.0,252.0h-6.5M1164.0,202.0h-6.5M1164.0,152.0h-6.5M1164.0,102.0h-6.5M1164.0,52.0h-6.5M1164.0,551.5v6.5M1222.4,551.5v6.5M1280.8,551.5v6.5M1339.2,551.5v6.5M1397.6,551.5v6.5M1456.0,551.5v6.5M1514.4,551.5v6.5M1572.8,551.5v6.5M1631.2,551.5v6.5M1689.6,551.5v6.5M1748.0,551.5v6.5" stroke-width="1.5" stroke="#c4c4c4"/>
</g>
<g font-size="15.1" fill="#dcdcdc">
<text x="1156.6" y="557.7" text-anchor="end">0,1</text>
<text x="1156.6" y="508.2" text-anchor="end">0,15</text>
<text x="1156.6" y="458.2" text-anchor="end">0,2</text>
<text x="1156.6" y="408.2" text-anchor="end">0,25</text>
<text x="1156.6" y="358.2" text-anchor="end">0,3</text>
<text x="1156.6" y="308.2" text-anchor="end">0,35</text>
<text x="1156.6" y="258.2" text-anchor="end">0,4</text>
<text x="1156.6" y="208.2" text-anchor="end">0,45</text>
<text x="1156.6" y="158.2" text-anchor="end">0,5</text>
<text x="1156.6" y="108.2" text-anchor="end">0,55</text>
<text x="1156.6" y="58.2" text-anchor="end">0,6</text>
<text x="1162.5" y="574.5" text-anchor="middle">0,05</text>
<text x="1220.9" y="574.5" text-anchor="middle">0,1</text>
<text x="1279.3" y="574.5" text-anchor="middle">0,15</text>
<text x="1337.7" y="574.5" text-anchor="middle">0,2</text>
<text x="1396.1" y="574.5" text-anchor="middle">0,25</text>
<text x="1454.5" y="574.5" text-anchor="middle">0,3</text>
<text x="1512.9" y="574.5" text-anchor="middle">0,35</text>
<text x="1571.3" y="574.5" text-anchor="middle">0,4</text>
<text x="1629.7" y="574.5" text-anchor="middle">0,45</text>
<text x="1688.1" y="574.5" text-anchor="middle">0,5</text>
<text x="1746.5" y="574.5" text-anchor="middle">0,55</text>
</g>
<text x="1467.8" y="45.9" font-size="15" fill="#d4d4d4" text-anchor="middle" textLength="86" lengthAdjust="spacingAndGlyphs">CIE 1976 u'v'</text>
<g fill="none" stroke="#fff" stroke-width="1.7">
<g stroke-opacity=".85">
<rect x="1258.5" y="88.5" width="13" height="13"/>
<rect x="1265.2" y="93.5" width="13" height="13"/>
<rect x="1267.7" y="96.9" width="13" height="13"/>
<rect x="1303.5" y="101.0" width="13" height="13"/>
<rect x="1322.8" y="86.9" width="13" height="13"/>
<rect x="1325.3" y="92.7" width="13" height="13"/>
<rect x="1322.8" y="106.0" width="13" height="13"/>
<rect x="1340.3" y="96.0" width="13" height="13"/>
<rect x="1357.8" y="86.0" width="13" height="13"/>
<rect x="1385.3" y="90.2" width="13" height="13"/>
<rect x="1380.3" y="100.2" width="13" height="13"/>
<rect x="1242.4" y="121.9" width="13" height="13"/>
<rect x="1278.5" y="121.1" width="13" height="13"/>
<rect x="1265.2" y="135.2" width="13" height="13"/>
<rect x="1278.5" y="138.5" width="13" height="13"/>
<rect x="1282.7" y="148.5" width="13" height="13"/>
<rect x="1339.5" y="126.9" width="13" height="13"/>
<rect x="1353.5" y="136.1" width="13" height="13"/>
<rect x="1321.1" y="145.2" width="13" height="13"/>
<rect x="1311.9" y="153.5" width="13" height="13"/>
<rect x="1370.3" y="140.2" width="13" height="13"/>
<rect x="1372.0" y="151.9" width="13" height="13"/>
<rect x="1370.3" y="157.7" width="13" height="13"/>
<rect x="1347.0" y="163.5" width="13" height="13"/>
<rect x="1235.2" y="160.2" width="13" height="13"/>
<rect x="1235.2" y="168.5" width="13" height="13"/>
<rect x="1259.4" y="169.5" width="13" height="13"/>
<rect x="1266.2" y="191.5" width="13" height="13"/>
<rect x="1381.8" y="190.8" width="13" height="13"/>
<rect x="1391.2" y="125.2" width="13" height="13"/>
<rect x="1387.0" y="135.2" width="13" height="13"/>
<rect x="1392.7" y="89.4" width="13" height="13"/>
<rect x="1420.2" y="94.4" width="13" height="13"/>
<rect x="1423.5" y="96.9" width="13" height="13"/>
<rect x="1411.9" y="107.7" width="13" height="13"/>
<rect x="1450.2" y="113.5" width="13" height="13"/>
<rect x="1408.5" y="122.7" width="13" height="13"/>
<rect x="1418.5" y="121.9" width="13" height="13"/>
<rect x="1441.9" y="122.7" width="13" height="13"/>
<rect x="1431.9" y="126.9" width="13" height="13"/>
<rect x="1420.2" y="135.2" width="13" height="13"/>
<rect x="1405.2" y="137.7" width="13" height="13"/>
<rect x="1445.2" y="144.4" width="13" height="13"/>
<rect x="1429.4" y="159.4" width="13" height="13"/>
<rect x="1476.6" y="103.5" width="13" height="13"/>
<rect x="1515.8" y="105.2" width="13" height="13"/>
<rect x="1521.5" y="144.4" width="13" height="13"/>
<rect x="1501.9" y="156.9" width="13" height="13"/>
<rect x="1563.7" y="162.8" width="13" height="13"/>
<rect x="1375.2" y="153.5" width="13" height="13"/>
<rect x="1579.0" y="126.4" width="13" height="13"/>
<rect x="1617.4" y="126.4" width="13" height="13"/>
<rect x="1617.7" y="137.7" width="13" height="13"/>
<rect x="1633.5" y="133.6" width="13" height="13"/>
<rect x="1248.0" y="212.2" width="13" height="13"/>
<rect x="1248.0" y="228.5" width="13" height="13"/>
<rect x="1283.1" y="209.0" width="13" height="13"/>
<rect x="1305.6" y="203.2" width="13" height="13"/>
<rect x="1302.8" y="209.0" width="13" height="13"/>
<rect x="1339.5" y="207.4" width="13" height="13"/>
<rect x="1376.2" y="218.9" width="13" height="13"/>
<rect x="1265.2" y="249.7" width="13" height="13"/>
<rect x="1346.5" y="245.6" width="13" height="13"/>
<rect x="1273.6" y="278.9" width="13" height="13"/>
<rect x="1303.0" y="292.5" width="13" height="13"/>
<rect x="1451.4" y="196.4" width="13" height="13"/>
<rect x="1474.9" y="201.9" width="13" height="13"/>
<rect x="1514.5" y="201.9" width="13" height="13"/>
<rect x="1401.0" y="252.4" width="13" height="13"/>
<rect x="1436.1" y="284.9" width="13" height="13"/>
<rect x="1293.0" y="373.0" width="13" height="13"/>
</g>
<rect x="1213.0" y="66.0" width="13" height="13"/>
<rect x="1337.8" y="80.2" width="13" height="13"/>
<rect x="1240.2" y="190.5" width="13" height="13"/>
<rect x="1679.9" y="119.4" width="13" height="13"/>
<rect x="1478.0" y="315.0" width="13" height="13"/>
<rect x="1303.0" y="486.3" width="13" height="13"/>
<rect x="1330.3" y="175.3" width="13" height="13" stroke="#000" stroke-width="2.4"/>
</g>
<g stroke-width="1.5">
<circle cx="1234.2" cy="72.8" r="4.5" fill="#10e010" stroke="#043e04"/>
<circle cx="1269.7" cy="89.5" r="4.5" fill="#6a8040" stroke="#1d2311"/>
<circle cx="1277.0" cy="93.9" r="4.5" fill="#80a060" stroke="#232c1a"/>
<circle cx="1278.4" cy="98.7" r="4.5" fill="#708850" stroke="#1f2616"/>
<circle cx="1318.9" cy="107.9" r="4.5" fill="#8a9850" stroke="#262a16"/>
<circle cx="1330.1" cy="110.4" r="4.5" fill="#5a6030" stroke="#191a0d"/>
<circle cx="1335.9" cy="90.9" r="4.5" fill="#b0b040" stroke="#313111"/>
<circle cx="1336.8" cy="95.4" r="4.5" fill="#a0a040" stroke="#2c2c11"/>
<circle cx="1349.0" cy="93.9" r="4.5" fill="#f0f010" stroke="#434304"/>
<circle cx="1358.5" cy="93.9" r="4.5" fill="#a8a040" stroke="#2f2c11"/>
<circle cx="1353.0" cy="100.9" r="4.5" fill="#a09840" stroke="#2c2a11"/>
<circle cx="1374.8" cy="90.9" r="4.5" fill="#b8a838" stroke="#332f0f"/>
<circle cx="1394.7" cy="96.4" r="4.5" fill="#d8b838" stroke="#3c330f"/>
<circle cx="1391.0" cy="104.7" r="4.5" fill="#a88830" stroke="#2f260d"/>
<circle cx="1252.0" cy="122.9" r="4.5" fill="#508878" stroke="#162621"/>
<circle cx="1290.9" cy="125.6" r="4.5" fill="#80a070" stroke="#232c1f"/>
<circle cx="1277.6" cy="138.1" r="4.5" fill="#304030" stroke="#0d110d"/>
<circle cx="1273.9" cy="139.7" r="4.5" fill="#80a888" stroke="#232f26"/>
<circle cx="1290.9" cy="156.7" r="4.5" fill="#90b898" stroke="#28332a"/>
<circle cx="1346.0" cy="135.9" r="4.5" fill="#c8c890" stroke="#383828"/>
<circle cx="1358.5" cy="135.9" r="4.5" fill="#384028" stroke="#0f110b"/>
<circle cx="1325.9" cy="153.7" r="4.5" fill="#c8d0a8" stroke="#383a2f"/>
<circle cx="1316.3" cy="161.8" r="4.5" fill="#b8c8a8" stroke="#33382f"/>
<circle cx="1317.9" cy="174.8" r="4.5" fill="#c0c8b8" stroke="#353833"/>
<circle cx="1336.8" cy="175.9" r="4.5" fill="#c8c8c0" stroke="#383835"/>
<circle cx="1349.0" cy="173.4" r="4.5" fill="#d0c8c0" stroke="#3a3835"/>
<circle cx="1351.8" cy="178.4" r="4.5" fill="#101010" stroke="#040404"/>
<circle cx="1332.6" cy="188.1" r="4.5" fill="#202020" stroke="#080808"/>
<circle cx="1369.8" cy="149.7" r="4.5" fill="#e8c8a0" stroke="#40382c"/>
<circle cx="1371.0" cy="160.6" r="4.5" fill="#e8c0a8" stroke="#40352f"/>
<circle cx="1367.6" cy="166.8" r="4.5" fill="#e0b8a0" stroke="#3e332c"/>
<circle cx="1391.8" cy="138.4" r="4.5" fill="#c09878" stroke="#352a21"/>
<circle cx="1386.5" cy="146.7" r="4.5" fill="#a08060" stroke="#2c231a"/>
<circle cx="1391.8" cy="147.2" r="4.5" fill="#c8a080" stroke="#382c23"/>
<circle cx="1236.4" cy="165.9" r="4.5" fill="#408078" stroke="#112321"/>
<circle cx="1236.4" cy="173.4" r="4.5" fill="#183830" stroke="#060f0d"/>
<circle cx="1262.9" cy="180.1" r="4.5" fill="#80b0a0" stroke="#23312c"/>
<circle cx="1398.8" cy="143.8" r="4.5" fill="#b89078" stroke="#332821"/>
<circle cx="1402.2" cy="96.4" r="4.5" fill="#e0c030" stroke="#3e350d"/>
<circle cx="1429.7" cy="104.7" r="4.5" fill="#f0b838" stroke="#43330f"/>
<circle cx="1435.5" cy="101.7" r="4.5" fill="#c89840" stroke="#382a11"/>
<circle cx="1420.0" cy="114.7" r="4.5" fill="#b08048" stroke="#312314"/>
<circle cx="1458.1" cy="119.7" r="4.5" fill="#906838" stroke="#281d0f"/>
<circle cx="1446.7" cy="127.1" r="4.5" fill="#c08860" stroke="#35261a"/>
<circle cx="1436.7" cy="125.9" r="4.5" fill="#503828" stroke="#160f0b"/>
<circle cx="1433.4" cy="130.1" r="4.5" fill="#604830" stroke="#1a140d"/>
<circle cx="1423.9" cy="128.9" r="4.5" fill="#805840" stroke="#231811"/>
<circle cx="1414.5" cy="131.4" r="4.5" fill="#806038" stroke="#231a0f"/>
<circle cx="1415.0" cy="138.4" r="4.5" fill="#c09878" stroke="#352a21"/>
<circle cx="1418.9" cy="145.1" r="4.5" fill="#e0a088" stroke="#3e2c26"/>
<circle cx="1405.0" cy="146.7" r="4.5" fill="#d0a088" stroke="#3a2c26"/>
<circle cx="1443.9" cy="152.2" r="4.5" fill="#c08080" stroke="#352323"/>
<circle cx="1429.7" cy="168.8" r="4.5" fill="#b08088" stroke="#312326"/>
<circle cx="1488.9" cy="108.0" r="4.5" fill="#d09040" stroke="#3a2811"/>
<circle cx="1526.8" cy="110.4" r="4.5" fill="#d08840" stroke="#3a2611"/>
<circle cx="1528.0" cy="150.6" r="4.5" fill="#c05050" stroke="#351616"/>
<circle cx="1514.8" cy="159.6" r="4.5" fill="#502828" stroke="#160b0b"/>
<circle cx="1576.8" cy="169.3" r="4.5" fill="#b04058" stroke="#311118"/>
<circle cx="1671.8" cy="126.2" r="4.5" fill="#e81010" stroke="#400404"/>
<circle cx="1594.2" cy="131.4" r="4.5" fill="#c84848" stroke="#381414"/>
<circle cx="1628.9" cy="129.7" r="4.5" fill="#b83838" stroke="#330f0f"/>
<circle cx="1632.1" cy="140.1" r="4.5" fill="#b03038" stroke="#310d0f"/>
<circle cx="1646.7" cy="136.7" r="4.5" fill="#a83040" stroke="#2f0d11"/>
<circle cx="1245.9" cy="203.9" r="4.5" fill="#20e8f0" stroke="#084043"/>
<circle cx="1270.1" cy="205.9" r="4.5" fill="#709898" stroke="#1f2a2a"/>
<circle cx="1287.9" cy="222.5" r="4.5" fill="#6090a8" stroke="#1a282f"/>
<circle cx="1309.3" cy="217.0" r="4.5" fill="#707888" stroke="#1f2126"/>
<circle cx="1307.9" cy="222.5" r="4.5" fill="#8090a8" stroke="#23282f"/>
<circle cx="1343.0" cy="222.5" r="4.5" fill="#9088a0" stroke="#28262c"/>
<circle cx="1381.8" cy="202.9" r="4.5" fill="#a08088" stroke="#2c2326"/>
<circle cx="1385.2" cy="234.7" r="4.5" fill="#483040" stroke="#140d11"/>
<circle cx="1249.2" cy="232.0" r="4.5" fill="#408888" stroke="#112626"/>
<circle cx="1250.5" cy="250.9" r="4.5" fill="#204040" stroke="#081111"/>
<circle cx="1262.9" cy="276.7" r="4.5" fill="#6088a0" stroke="#1a262c"/>
<circle cx="1353.0" cy="267.2" r="4.5" fill="#787090" stroke="#211f28"/>
<circle cx="1272.9" cy="306.8" r="4.5" fill="#304858" stroke="#0d1418"/>
<circle cx="1467.9" cy="207.0" r="4.5" fill="#402830" stroke="#110b0d"/>
<circle cx="1482.1" cy="215.4" r="4.5" fill="#a06078" stroke="#2c1a21"/>
<circle cx="1523.8" cy="208.4" r="4.5" fill="#803048" stroke="#230d14"/>
<circle cx="1412.9" cy="275.9" r="4.5" fill="#402838" stroke="#110b0f"/>
<circle cx="1447.1" cy="311.8" r="4.5" fill="#603868" stroke="#1a0f1d"/>
<circle cx="1307.7" cy="324.9" r="4.5" fill="#485080" stroke="#141623"/>
<circle cx="1479.2" cy="337.5" r="4.5" fill="#f020e0" stroke="#43083e"/>
<circle cx="1296.9" cy="438.5" r="4.5" fill="#203060" stroke="#080d1a"/>
<circle cx="1293.8" cy="513.0" r="3.2" fill="#1010e0" stroke="#04043e"/>
</g>
<clipPath id="ic"><rect x="1621" y="352.5" width="183.5" height="141"/></clipPath>
<g clip-path="url(#ic)">
<rect x="1621" y="352.5" width="183.5" height="141" fill="url(#ins)"/>
<rect x="1621" y="352.5" width="183.5" height="141" fill="url(#insw)"/>
<path d="M1621,361 L1804.5,485.5 L1804.5,421.3 L1716.7,352.5 L1621,352.5Z" fill="#000" fill-opacity=".40"/>
<path d="M1716.7,352.5 L1804.5,421.3 L1804.5,352.5Z" fill="#242424"/>
</g>
<rect x="1621" y="352.5" width="183.5" height="141" fill="none" stroke="#8c8c8c" stroke-width="1.2"/>
<rect x="1705.5" y="415.5" width="13" height="13" fill="none" stroke="#fff" stroke-width="1.6"/>
<circle cx="1692.7" cy="478" r="4" fill="none" stroke="#111" stroke-width="1.3"/>
<rect x="1534" y="497" width="273.5" height="54" fill="#303030"/>
<text x="1535.2" y="518.3" font-size="21.2" fill="#f0f0f0" textLength="216.8" lengthAdjust="spacingAndGlyphs">RGB Triplet: 255, 255, 0</text>
<text x="1581.6" y="545" font-size="21.2" fill="#f0f0f0" textLength="80" lengthAdjust="spacingAndGlyphs">deltaE: 3</text>
<path d="M1808.5,51.5V551.5H1163.5" fill="none" stroke="#b0b0b0" stroke-width="1"/>
<rect x="724.4" y="45.8" width="366" height="509.2" fill="#262626"/>
<path d="M773.0,45.8V555M821.7,45.8V555M870.3,45.8V555M919.0,45.8V555M967.6,45.8V555M1016.2,45.8V555M1064.9,45.8V555" stroke="#9a9a9a" stroke-width="1.1" fill="none"/>
<g stroke="#000" stroke-width="1.4">
<rect x="725.0" y="45.75" width="70.9" height="2.9" fill="#c8c020"/>
<rect x="725.0" y="51.44" width="44.1" height="2.9" fill="#ff20f0"/>
<rect x="725.0" y="56.44" width="63.8" height="2.9" fill="#20f0f0"/>
<rect x="725.0" y="61.43" width="141.4" height="2.9" fill="#1818a0"/>
<rect x="725.0" y="66.43" width="90.4" height="2.9" fill="#30a040"/>
<rect x="725.0" y="71.42" width="50.2" height="2.9" fill="#d02020"/>
<rect x="725.0" y="76.42" width="43.2" height="2.9" fill="#2a2018"/>
<rect x="725.0" y="81.42" width="85.2" height="2.9" fill="#8a8a50"/>
<rect x="725.0" y="86.41" width="62.6" height="2.9" fill="#b0a878"/>
<rect x="725.0" y="91.40" width="54.4" height="2.9" fill="#a89868"/>
<rect x="725.0" y="96.40" width="78.7" height="2.9" fill="#9ab088"/>
<rect x="725.0" y="101.39" width="83.5" height="2.9" fill="#7a8a48"/>
<rect x="725.0" y="106.39" width="69.9" height="2.9" fill="#8a8a58"/>
<rect x="725.0" y="111.39" width="43.7" height="2.9" fill="#5a9a6a"/>
<rect x="725.0" y="116.38" width="43.7" height="2.9" fill="#305038"/>
<rect x="725.0" y="121.37" width="67.5" height="2.9" fill="#50a080"/>
<rect x="725.0" y="126.37" width="50.5" height="2.9" fill="#7a9060"/>
<rect x="725.0" y="131.37" width="43.7" height="2.9" fill="#484828"/>
<rect x="725.0" y="136.36" width="82.1" height="2.9" fill="#a09050"/>
<rect x="725.0" y="141.36" width="55.3" height="2.9" fill="#807838"/>
<rect x="725.0" y="146.35" width="43.2" height="2.9" fill="#c0a090"/>
<rect x="725.0" y="151.34" width="1.8" height="2.9" fill="#202020"/>
<rect x="725.0" y="156.34" width="41.2" height="2.9" fill="#d0a8a0"/>
<rect x="725.0" y="161.34" width="43.7" height="2.9" fill="#d8c0b8"/>
<rect x="725.0" y="166.33" width="43.7" height="2.9" fill="#484830"/>
<rect x="725.0" y="171.33" width="39.5" height="2.9" fill="#e0b0b0"/>
<rect x="725.0" y="176.32" width="41.2" height="2.9" fill="#c8a088"/>
<rect x="725.0" y="181.32" width="43.7" height="2.9" fill="#407070"/>
<rect x="725.0" y="186.31" width="45.1" height="2.9" fill="#408080"/>
<rect x="725.0" y="191.31" width="58.5" height="2.9" fill="#f0c020"/>
<rect x="725.0" y="196.30" width="88.9" height="2.9" fill="#8a8030"/>
<rect x="725.0" y="201.30" width="48.0" height="2.9" fill="#c09060"/>
<rect x="725.0" y="206.29" width="26.2" height="2.9" fill="#c08030"/>
<rect x="725.0" y="211.29" width="40.3" height="2.9" fill="#806040"/>
<rect x="725.0" y="216.28" width="20.6" height="2.9" fill="#503820"/>
<rect x="725.0" y="221.28" width="44.9" height="2.9" fill="#b09070"/>
<rect x="725.0" y="226.27" width="47.8" height="2.9" fill="#e0b0a0"/>
<rect x="725.0" y="231.27" width="57.8" height="2.9" fill="#a07060"/>
<rect x="725.0" y="236.26" width="44.1" height="2.9" fill="#8090b0"/>
<rect x="725.0" y="241.26" width="24.4" height="2.9" fill="#305050"/>
<rect x="725.0" y="246.25" width="45.1" height="2.9" fill="#e0a080"/>
<rect x="725.0" y="251.25" width="68.7" height="2.9" fill="#a05030"/>
<rect x="725.0" y="256.24" width="48.0" height="2.9" fill="#c0c0b0"/>
<rect x="725.0" y="261.24" width="51.9" height="2.9" fill="#204848"/>
<rect x="725.0" y="266.23" width="52.9" height="2.9" fill="#205050"/>
<rect x="725.0" y="271.23" width="62.6" height="2.9" fill="#e05050"/>
<rect x="725.0" y="276.22" width="38.3" height="2.9" fill="#602828"/>
<rect x="725.0" y="281.22" width="69.2" height="2.9" fill="#c0d0c0"/>
<rect x="725.0" y="286.21" width="55.3" height="2.9" fill="#c09080"/>
<rect x="725.0" y="291.20" width="48.0" height="2.9" fill="#607080"/>
<rect x="725.0" y="296.20" width="67.5" height="2.9" fill="#303030"/>
<rect x="725.0" y="301.19" width="48.0" height="2.9" fill="#c03030"/>
<rect x="725.0" y="306.19" width="34.2" height="2.9" fill="#d08080"/>
<rect x="725.0" y="311.19" width="62.6" height="2.9" fill="#c8c8c8"/>
<rect x="725.0" y="316.18" width="60.9" height="2.9" fill="#4090a0"/>
<rect x="725.0" y="321.18" width="33.0" height="2.9" fill="#c070a0"/>
<rect x="725.0" y="326.17" width="67.5" height="2.9" fill="#b0a070"/>
<rect x="725.0" y="331.17" width="55.3" height="2.9" fill="#902020"/>
<rect x="725.0" y="336.16" width="76.0" height="2.9" fill="#50a050"/>
<rect x="725.0" y="341.15" width="116.1" height="2.9" fill="#2030a0"/>
<rect x="725.0" y="346.15" width="50.5" height="2.9" fill="#d0d0d0"/>
<rect x="725.0" y="351.14" width="48.0" height="2.9" fill="#3060b0"/>
<rect x="725.0" y="356.14" width="50.5" height="2.9" fill="#a030a0"/>
<rect x="725.0" y="361.13" width="30.5" height="2.9" fill="#502020"/>
<rect x="725.0" y="366.13" width="60.2" height="2.9" fill="#c02020"/>
<rect x="725.0" y="371.12" width="38.3" height="2.9" fill="#c0c080"/>
<rect x="725.0" y="376.12" width="62.6" height="2.9" fill="#e0a060"/>
<rect x="725.0" y="381.12" width="76.0" height="2.9" fill="#808040"/>
<rect x="725.0" y="386.11" width="48.0" height="2.9" fill="#503050"/>
<rect x="725.0" y="391.11" width="26.2" height="2.9" fill="#d06060"/>
<rect x="725.0" y="396.10" width="62.6" height="2.9" fill="#303070"/>
<rect x="725.0" y="401.09" width="65.1" height="2.9" fill="#705030"/>
<rect x="725.0" y="406.09" width="65.1" height="2.9" fill="#e0b090"/>
<rect x="725.0" y="411.08" width="61.9" height="2.9" fill="#303060"/>
<rect x="725.0" y="416.08" width="46.6" height="2.9" fill="#a06080"/>
<rect x="725.0" y="421.07" width="26.9" height="2.9" fill="#d02050"/>
<rect x="725.0" y="426.07" width="28.1" height="2.9" fill="#802030"/>
<rect x="725.0" y="431.06" width="60.2" height="2.9" fill="#e0c090"/>
<rect x="725.0" y="436.06" width="34.2" height="2.9" fill="#80c0a0"/>
<rect x="725.0" y="441.06" width="57.8" height="2.9" fill="#505060"/>
<rect x="725.0" y="446.05" width="17.4" height="2.9" fill="#505030"/>
<rect x="725.0" y="451.05" width="48.0" height="2.9" fill="#507080"/>
<rect x="725.0" y="456.04" width="45.6" height="2.9" fill="#d09070"/>
<rect x="725.0" y="461.04" width="30.5" height="2.9" fill="#704020"/>
<rect x="725.0" y="466.03" width="78.7" height="2.9" fill="#d8d6cc"/>
<rect x="725.0" y="471.02" width="41.2" height="2.9" fill="#482c48"/>
<rect x="725.0" y="476.02" width="9.9" height="2.9" fill="#962058"/>
<rect x="725.0" y="486.01" width="48.0" height="2.9" fill="#2a2a2a"/>
<rect x="725.0" y="491.00" width="43.7" height="2.9" fill="#353535"/>
<rect x="725.0" y="496.00" width="45.6" height="2.9" fill="#484848"/>
<rect x="725.0" y="501.00" width="50.5" height="2.9" fill="#555555"/>
<rect x="725.0" y="505.99" width="51.2" height="2.9" fill="#606060"/>
<rect x="725.0" y="510.99" width="60.2" height="2.9" fill="#707070"/>
<rect x="725.0" y="515.98" width="62.6" height="2.9" fill="#787878"/>
<rect x="725.0" y="520.98" width="74.8" height="2.9" fill="#8a8a8a"/>
<rect x="725.0" y="525.97" width="75.3" height="2.9" fill="#9a9a9a"/>
<rect x="725.0" y="530.96" width="86.0" height="2.9" fill="#aaaaaa"/>
<rect x="725.0" y="535.96" width="93.0" height="2.9" fill="#b8b8b8"/>
<rect x="725.0" y="540.95" width="96.7" height="2.9" fill="#c5c5c5"/>
<rect x="725.0" y="545.95" width="104.0" height="2.9" fill="#e0e0e0"/>
<rect x="725.0" y="550.94" width="115.6" height="2.9" fill="#f8f8f8"/>
</g>
<g fill="url(#bsh)">
<rect x="725.0" y="46.45" width="70.9" height="2.9"/>
<rect x="725.0" y="51.44" width="44.1" height="2.9"/>
<rect x="725.0" y="56.44" width="63.8" height="2.9"/>
<rect x="725.0" y="61.43" width="141.4" height="2.9"/>
<rect x="725.0" y="66.43" width="90.4" height="2.9"/>
<rect x="725.0" y="71.42" width="50.2" height="2.9"/>
<rect x="725.0" y="76.42" width="43.2" height="2.9"/>
<rect x="725.0" y="81.42" width="85.2" height="2.9"/>
<rect x="725.0" y="86.41" width="62.6" height="2.9"/>
<rect x="725.0" y="91.40" width="54.4" height="2.9"/>
<rect x="725.0" y="96.40" width="78.7" height="2.9"/>
<rect x="725.0" y="101.39" width="83.5" height="2.9"/>
<rect x="725.0" y="106.39" width="69.9" height="2.9"/>
<rect x="725.0" y="111.39" width="43.7" height="2.9"/>
<rect x="725.0" y="116.38" width="43.7" height="2.9"/>
<rect x="725.0" y="121.37" width="67.5" height="2.9"/>
<rect x="725.0" y="126.37" width="50.5" height="2.9"/>
<rect x="725.0" y="131.37" width="43.7" height="2.9"/>
<rect x="725.0" y="136.36" width="82.1" height="2.9"/>
<rect x="725.0" y="141.36" width="55.3" height="2.9"/>
<rect x="725.0" y="146.35" width="43.2" height="2.9"/>
<rect x="725.0" y="151.34" width="1.8" height="2.9"/>
<rect x="725.0" y="156.34" width="41.2" height="2.9"/>
<rect x="725.0" y="161.34" width="43.7" height="2.9"/>
<rect x="725.0" y="166.33" width="43.7" height="2.9"/>
<rect x="725.0" y="171.33" width="39.5" height="2.9"/>
<rect x="725.0" y="176.32" width="41.2" height="2.9"/>
<rect x="725.0" y="181.32" width="43.7" height="2.9"/>
<rect x="725.0" y="186.31" width="45.1" height="2.9"/>
<rect x="725.0" y="191.31" width="58.5" height="2.9"/>
<rect x="725.0" y="196.30" width="88.9" height="2.9"/>
<rect x="725.0" y="201.30" width="48.0" height="2.9"/>
<rect x="725.0" y="206.29" width="26.2" height="2.9"/>
<rect x="725.0" y="211.29" width="40.3" height="2.9"/>
<rect x="725.0" y="216.28" width="20.6" height="2.9"/>
<rect x="725.0" y="221.28" width="44.9" height="2.9"/>
<rect x="725.0" y="226.27" width="47.8" height="2.9"/>
<rect x="725.0" y="231.27" width="57.8" height="2.9"/>
<rect x="725.0" y="236.26" width="44.1" height="2.9"/>
<rect x="725.0" y="241.26" width="24.4" height="2.9"/>
<rect x="725.0" y="246.25" width="45.1" height="2.9"/>
<rect x="725.0" y="251.25" width="68.7" height="2.9"/>
<rect x="725.0" y="256.24" width="48.0" height="2.9"/>
<rect x="725.0" y="261.24" width="51.9" height="2.9"/>
<rect x="725.0" y="266.23" width="52.9" height="2.9"/>
<rect x="725.0" y="271.23" width="62.6" height="2.9"/>
<rect x="725.0" y="276.22" width="38.3" height="2.9"/>
<rect x="725.0" y="281.22" width="69.2" height="2.9"/>
<rect x="725.0" y="286.21" width="55.3" height="2.9"/>
<rect x="725.0" y="291.20" width="48.0" height="2.9"/>
<rect x="725.0" y="296.20" width="67.5" height="2.9"/>
<rect x="725.0" y="301.19" width="48.0" height="2.9"/>
<rect x="725.0" y="306.19" width="34.2" height="2.9"/>
<rect x="725.0" y="311.19" width="62.6" height="2.9"/>
<rect x="725.0" y="316.18" width="60.9" height="2.9"/>
<rect x="725.0" y="321.18" width="33.0" height="2.9"/>
<rect x="725.0" y="326.17" width="67.5" height="2.9"/>
<rect x="725.0" y="331.17" width="55.3" height="2.9"/>
<rect x="725.0" y="336.16" width="76.0" height="2.9"/>
<rect x="725.0" y="341.15" width="116.1" height="2.9"/>
<rect x="725.0" y="346.15" width="50.5" height="2.9"/>
<rect x="725.0" y="351.14" width="48.0" height="2.9"/>
<rect x="725.0" y="356.14" width="50.5" height="2.9"/>
<rect x="725.0" y="361.13" width="30.5" height="2.9"/>
<rect x="725.0" y="366.13" width="60.2" height="2.9"/>
<rect x="725.0" y="371.12" width="38.3" height="2.9"/>
<rect x="725.0" y="376.12" width="62.6" height="2.9"/>
<rect x="725.0" y="381.12" width="76.0" height="2.9"/>
<rect x="725.0" y="386.11" width="48.0" height="2.9"/>
<rect x="725.0" y="391.11" width="26.2" height="2.9"/>
<rect x="725.0" y="396.10" width="62.6" height="2.9"/>
<rect x="725.0" y="401.09" width="65.1" height="2.9"/>
<rect x="725.0" y="406.09" width="65.1" height="2.9"/>
<rect x="725.0" y="411.08" width="61.9" height="2.9"/>
<rect x="725.0" y="416.08" width="46.6" height="2.9"/>
<rect x="725.0" y="421.07" width="26.9" height="2.9"/>
<rect x="725.0" y="426.07" width="28.1" height="2.9"/>
<rect x="725.0" y="431.06" width="60.2" height="2.9"/>
<rect x="725.0" y="436.06" width="34.2" height="2.9"/>
<rect x="725.0" y="441.06" width="57.8" height="2.9"/>
<rect x="725.0" y="446.05" width="17.4" height="2.9"/>
<rect x="725.0" y="451.05" width="48.0" height="2.9"/>
<rect x="725.0" y="456.04" width="45.6" height="2.9"/>
<rect x="725.0" y="461.04" width="30.5" height="2.9"/>
<rect x="725.0" y="466.03" width="78.7" height="2.9"/>
<rect x="725.0" y="471.02" width="41.2" height="2.9"/>
<rect x="725.0" y="476.02" width="9.9" height="2.9"/>
<rect x="725.0" y="486.01" width="48.0" height="2.9"/>
<rect x="725.0" y="491.00" width="43.7" height="2.9"/>
<rect x="725.0" y="496.00" width="45.6" height="2.9"/>
<rect x="725.0" y="501.00" width="50.5" height="2.9"/>
<rect x="725.0" y="505.99" width="51.2" height="2.9"/>
<rect x="725.0" y="510.99" width="60.2" height="2.9"/>
<rect x="725.0" y="515.98" width="62.6" height="2.9"/>
<rect x="725.0" y="520.98" width="74.8" height="2.9"/>
<rect x="725.0" y="525.97" width="75.3" height="2.9"/>
<rect x="725.0" y="530.96" width="86.0" height="2.9"/>
<rect x="725.0" y="535.96" width="93.0" height="2.9"/>
<rect x="725.0" y="540.95" width="96.7" height="2.9"/>
<rect x="725.0" y="545.95" width="104.0" height="2.9"/>
<rect x="725.0" y="550.94" width="115.6" height="2.9"/>
</g>
<rect x="724.5" y="45.5" width="366" height="510" fill="none" stroke="#b0b0b0" stroke-width="1"/>
<path d="M724.4,555v6.5M773.0,555v6.5M821.7,555v6.5M870.3,555v6.5M919.0,555v6.5M967.6,555v6.5M1016.2,555v6.5M1064.9,555v6.5" stroke="#c8c8c8" stroke-width="1.7" fill="none"/>
<g font-size="15.6" fill="#dcdcdc" text-anchor="middle">
<text x="723.9" y="578.2">0</text>
<text x="772.5" y="578.2">2</text>
<text x="821.2" y="578.2">4</text>
<text x="869.8" y="578.2">6</text>
<text x="918.5" y="578.2">8</text>
<text x="967.1" y="578.2">10</text>
<text x="1015.7" y="578.2">12</text>
<text x="1064.4" y="578.2">14</text>
</g>
<text x="907.6" y="40.8" font-size="15" fill="#d4d4d4" text-anchor="middle" textLength="81.3" lengthAdjust="spacingAndGlyphs">DeltaE 2000</text>
<g fill="#f2f2f2">
<text x="126" y="59" font-size="39.5" textLength="417.5" lengthAdjust="spacingAndGlyphs">ColorChecker<tspan font-size="30">®</tspan> Analysis</text>
<text x="193.0" y="109.0" font-size="17.8" textLength="69.7" lengthAdjust="spacingAndGlyphs">Click the</text>
<g font-style="italic">
<text x="268.3" y="109.0" font-size="17.8" textLength="95.0" lengthAdjust="spacingAndGlyphs">Read Series</text>
</g>
<text x="367.7" y="109.0" font-size="17.8" textLength="238.0" lengthAdjust="spacingAndGlyphs">button to measure all colors.</text>
<text x="193.0" y="139.9" font-size="17.8" textLength="513.9" lengthAdjust="spacingAndGlyphs">Mouse over the error bars on the deltaE chart to view a visual</text>
<text x="193.0" y="164.6" font-size="17.8" textLength="448.2" lengthAdjust="spacingAndGlyphs">representation of each color error. 1 dE error or less is</text>
<text x="193.0" y="189.5" font-size="17.8" textLength="163.0" lengthAdjust="spacingAndGlyphs">typically not visible.</text>
<text x="193.0" y="214.4" font-size="17.8" textLength="504.5" lengthAdjust="spacingAndGlyphs">View a larger visual error comparison for each color value on</text>
<text x="193.0" y="239.2" font-size="17.8" textLength="283.5" lengthAdjust="spacingAndGlyphs">the color comparator chart below.</text>
<text x="193.0" y="270.7" font-size="17.8" textLength="392.0" lengthAdjust="spacingAndGlyphs">Click “Save” to save data and view or print your</text>
<g font-style="italic">
<text x="590.6" y="270.7" font-size="17.8" textLength="61.4" lengthAdjust="spacingAndGlyphs">Display</text>
</g>
<g font-style="italic">
<text x="193.0" y="296.0" font-size="17.8" textLength="200.5" lengthAdjust="spacingAndGlyphs">Conformance Certificate</text>
</g>
<text x="394.3" y="296.0" font-size="17.8" textLength="4.1" lengthAdjust="spacingAndGlyphs">.</text>
<text x="193.0" y="327.2" font-size="17.8" textLength="513.9" lengthAdjust="spacingAndGlyphs">Click “Next” to check how well the display could perform with</text>
<text x="193.0" y="351.6" font-size="17.8" textLength="163.9" lengthAdjust="spacingAndGlyphs">a corrective 3D LUT.</text>
<text x="169.6" y="109.0" font-size="14.6" textLength="12.3" lengthAdjust="spacingAndGlyphs">1.</text>
<text x="169.6" y="139.9" font-size="14.6" textLength="12.3" lengthAdjust="spacingAndGlyphs">2.</text>
<text x="169.6" y="270.7" font-size="14.6" textLength="12.3" lengthAdjust="spacingAndGlyphs">3.</text>
<text x="169.6" y="327.2" font-size="14.6" textLength="12.3" lengthAdjust="spacingAndGlyphs">4.</text>
</g>
<rect x="128" y="390.6" width="586" height="2.2" fill="url(#hr)"/>
<g fill="#f4f4f4" stroke="#f4f4f4" stroke-width=".35">
<text x="416.7" y="427.7" font-size="20" text-anchor="middle" textLength="168" lengthAdjust="spacingAndGlyphs">Performance Data</text>
<text x="130.7" y="461.0" font-size="25" textLength="209.3" lengthAdjust="spacingAndGlyphs">White Luminance:</text>
<text x="355.0" y="461.0" font-size="25" textLength="63.3" lengthAdjust="spacingAndGlyphs">571,3</text>
<text x="452.7" y="461.0" font-size="25" textLength="69.0" lengthAdjust="spacingAndGlyphs">cd/m²</text>
<text x="136.7" y="502.7" font-size="25" textLength="203.3" lengthAdjust="spacingAndGlyphs">Black Luminance:</text>
<text x="352.5" y="502.7" font-size="25" textLength="13.0" lengthAdjust="spacingAndGlyphs">0</text>
<text x="452.7" y="502.7" font-size="25" textLength="69.0" lengthAdjust="spacingAndGlyphs">cd/m²</text>
<text x="212.7" y="544.3" font-size="25" textLength="128.0" lengthAdjust="spacingAndGlyphs">Avg deltaE:</text>
<text x="355.0" y="544.3" font-size="25" textLength="35.0" lengthAdjust="spacingAndGlyphs">2,3</text>
<text x="207.3" y="586.0" font-size="25" textLength="133.4" lengthAdjust="spacingAndGlyphs">Max deltaE:</text>
<text x="355.0" y="586.0" font-size="25" textLength="37.0" lengthAdjust="spacingAndGlyphs">5,8</text>
<text x="446.7" y="586.0" font-size="25" textLength="226.6" lengthAdjust="spacingAndGlyphs">@ Point: 100% Blue</text>
</g>
<circle cx="154" cy="535.6" r="18.6" fill="#2a2a2a"/><circle cx="154" cy="535" r="17.3" fill="url(#gg)"/>
<circle cx="154" cy="577.8" r="18.6" fill="#2a2a2a"/><circle cx="154" cy="577.2" r="17.3" fill="url(#gr)"/>
<rect x="115.7" y="602.8" width="1702.3" height="221.4" fill="#000"/>
<defs>
<linearGradient id="s0" x1="0" y1="0" x2="0" y2="1"><stop offset=".483" stop-color="#f0f4fd"/><stop offset=".523" stop-color="#f5f5f5"/></linearGradient>
<linearGradient id="s1" x1="0" y1="0" x2="0" y2="1"><stop offset=".483" stop-color="#dde1ea"/><stop offset=".523" stop-color="#e0e0e0"/></linearGradient>
<linearGradient id="s2" x1="0" y1="0" x2="0" y2="1"><stop offset=".483" stop-color="#c3c7d0"/><stop offset=".523" stop-color="#c6c6c6"/></linearGradient>
<linearGradient id="s3" x1="0" y1="0" x2="0" y2="1"><stop offset=".483" stop-color="#b6b8c0"/><stop offset=".523" stop-color="#b9b9b9"/></linearGradient>
<linearGradient id="s4" x1="0" y1="0" x2="0" y2="1"><stop offset=".483" stop-color="#a9abb0"/><stop offset=".523" stop-color="#acacac"/></linearGradient>
<linearGradient id="s5" x1="0" y1="0" x2="0" y2="1"><stop offset=".483" stop-color="#9a9b9f"/><stop offset=".523" stop-color="#9c9c9c"/></linearGradient>
<linearGradient id="s6" x1="0" y1="0" x2="0" y2="1"><stop offset=".483" stop-color="#8a8b8e"/><stop offset=".523" stop-color="#8b8b8b"/></linearGradient>
<linearGradient id="s7" x1="0" y1="0" x2="0" y2="1"><stop offset=".483" stop-color="#75777b"/><stop offset=".523" stop-color="#787878"/></linearGradient>
<linearGradient id="s8" x1="0" y1="0" x2="0" y2="1"><stop offset=".483" stop-color="#6a6c70"/><stop offset=".523" stop-color="#6e6e6e"/></linearGradient>
<linearGradient id="s9" x1="0" y1="0" x2="0" y2="1"><stop offset=".483" stop-color="#5c5e62"/><stop offset=".523" stop-color="#606060"/></linearGradient>
<linearGradient id="s10" x1="0" y1="0" x2="0" y2="1"><stop offset=".483" stop-color="#505154"/><stop offset=".523" stop-color="#545454"/></linearGradient>
<linearGradient id="s11" x1="0" y1="0" x2="0" y2="1"><stop offset=".483" stop-color="#46484b"/><stop offset=".523" stop-color="#4a4a4a"/></linearGradient>
<linearGradient id="s12" x1="0" y1="0" x2="0" y2="1"><stop offset=".483" stop-color="#323436"/><stop offset=".523" stop-color="#383838"/></linearGradient>
<linearGradient id="s13" x1="0" y1="0" x2="0" y2="1"><stop offset=".483" stop-color="#26282a"/><stop offset=".523" stop-color="#2c2c2c"/></linearGradient>
<linearGradient id="s14" x1="0" y1="0" x2="0" y2="1"><stop offset=".483" stop-color="#000000"/><stop offset=".523" stop-color="#000000"/></linearGradient>
<linearGradient id="s15" x1="0" y1="0" x2="0" y2="1"><stop offset=".483" stop-color="#98205a"/><stop offset=".523" stop-color="#9a2058"/></linearGradient>
<linearGradient id="s16" x1="0" y1="0" x2="0" y2="1"><stop offset=".483" stop-color="#482c48"/><stop offset=".523" stop-color="#4a3048"/></linearGradient>
<linearGradient id="s17" x1="0" y1="0" x2="0" y2="1"><stop offset=".483" stop-color="#d8d8d0"/><stop offset=".523" stop-color="#d6d4c4"/></linearGradient>
<linearGradient id="s18" x1="0" y1="0" x2="0" y2="1"><stop offset=".483" stop-color="#704222"/><stop offset=".523" stop-color="#72442a"/></linearGradient>
<linearGradient id="s19" x1="0" y1="0" x2="0" y2="1"><stop offset=".483" stop-color="#d09070"/><stop offset=".523" stop-color="#cc8a68"/></linearGradient>
<linearGradient id="s20" x1="0" y1="0" x2="0" y2="1"><stop offset=".483" stop-color="#54708a"/><stop offset=".523" stop-color="#58708a"/></linearGradient>
<linearGradient id="s21" x1="0" y1="0" x2="0" y2="1"><stop offset=".483" stop-color="#5a6420"/><stop offset=".523" stop-color="#5a6424"/></linearGradient>
<linearGradient id="s22" x1="0" y1="0" x2="0" y2="1"><stop offset=".483" stop-color="#8274a0"/><stop offset=".523" stop-color="#827494"/></linearGradient>
<linearGradient id="s23" x1="0" y1="0" x2="0" y2="1"><stop offset=".483" stop-color="#74bc98"/><stop offset=".523" stop-color="#6cba90"/></linearGradient>
</defs>
<g stroke="#fff" stroke-opacity=".93" stroke-width="1">
<rect x="133.5" y="612.5" width="60" height="172" fill="url(#s0)"/>
<rect x="203.5" y="612.5" width="60" height="172" fill="url(#s1)"/>
<rect x="273.5" y="612.5" width="60" height="172" fill="url(#s2)"/>
<rect x="343.5" y="612.5" width="60" height="172" fill="url(#s3)"/>
<rect x="413.5" y="612.5" width="60" height="172" fill="url(#s4)"/>
<rect x="483.5" y="612.5" width="60" height="172" fill="url(#s5)"/>
<rect x="554.5" y="612.5" width="60" height="172" fill="url(#s6)"/>
<rect x="624.5" y="612.5" width="60" height="172" fill="url(#s7)"/>
<rect x="694.5" y="612.5" width="60" height="172" fill="url(#s8)"/>
<rect x="764.5" y="612.5" width="60" height="172" fill="url(#s9)"/>
<rect x="834.5" y="612.5" width="60" height="172" fill="url(#s10)"/>
<rect x="904.5" y="612.5" width="60" height="172" fill="url(#s11)"/>
<rect x="974.5" y="612.5" width="60" height="172" fill="url(#s12)"/>
<rect x="1044.5" y="612.5" width="60" height="172" fill="url(#s13)"/>
<rect x="1114.5" y="612.5" width="60" height="172" fill="url(#s14)"/>
<rect x="1184.5" y="612.5" width="60" height="172" fill="url(#s15)"/>
<rect x="1254.5" y="612.5" width="60" height="172" fill="url(#s16)"/>
<rect x="1325.5" y="612.5" width="60" height="172" fill="url(#s17)"/>
<rect x="1395.5" y="612.5" width="60" height="172" fill="url(#s18)"/>
<rect x="1465.5" y="612.5" width="60" height="172" fill="url(#s19)"/>
<rect x="1535.5" y="612.5" width="60" height="172" fill="url(#s20)"/>
<rect x="1605.5" y="612.5" width="60" height="172" fill="url(#s21)"/>
<rect x="1675.5" y="612.5" width="60" height="172" fill="url(#s22)"/>
<rect x="1745.5" y="612.5" width="60" height="172" fill="url(#s23)"/>
<rect x="1815.5" y="612.5" width="10" height="172" fill="#f0c8a4" clip-path="url(#swc)"/>
</g>
<clipPath id="swc"><rect x="1800" y="600" width="18" height="230"/></clipPath>
<g font-size="12.4" font-weight="bold" fill="#fff" text-anchor="middle">
<text x="163.5" y="801">White</text>
<text x="233.5" y="801">6J</text>
<text x="303.5" y="801">5F</text>
<text x="373.5" y="801">6I</text>
<text x="443.5" y="801">6K</text>
<text x="513.5" y="801">5G</text>
<text x="584.5" y="801">6H</text>
<text x="654.5" y="801">5H</text>
<text x="724.5" y="801">7K</text>
<text x="794.5" y="801">6G</text>
<text x="864.5" y="801">5I</text>
<text x="934.5" y="801">6F</text>
<text x="1004.5" y="801">8K</text>
<text x="1074.5" y="801">5J</text>
<text x="1144.5" y="801">Black</text>
<text x="1214.5" y="801">2B</text>
<text x="1284.5" y="801">2C</text>
<text x="1355.5" y="801">2D</text>
<text x="1425.5" y="801">2E</text>
<text x="1495.5" y="801">2F</text>
<text x="1565.5" y="801">2G</text>
<text x="1635.5" y="801">2H</text>
<text x="1705.5" y="801">2I</text>
<text x="1775.5" y="801">2J</text>
<text transform="translate(128.6,649.5) rotate(-90)">Actual</text>
<text transform="translate(128.6,746.7) rotate(-90)">Target</text>
</g>
<rect x="115.7" y="824.2" width="1702.3" height="15" fill="#676767"/>
<rect x="133.5" y="824.6" width="393.5" height="14.4" rx="7" fill="#4b4b4b"/>
<rect x="116.5" y="824.6" width="15.5" height="14.4" fill="#8e8e8e"/><path d="M121,832l6.5,-5v10z" fill="#3a3a3a"/>
<rect x="1801.5" y="824.6" width="15.5" height="14.4" fill="#8e8e8e"/><path d="M1812.5,832l-6.5,-5v10z" fill="#3a3a3a"/>
</svg></body></html>
